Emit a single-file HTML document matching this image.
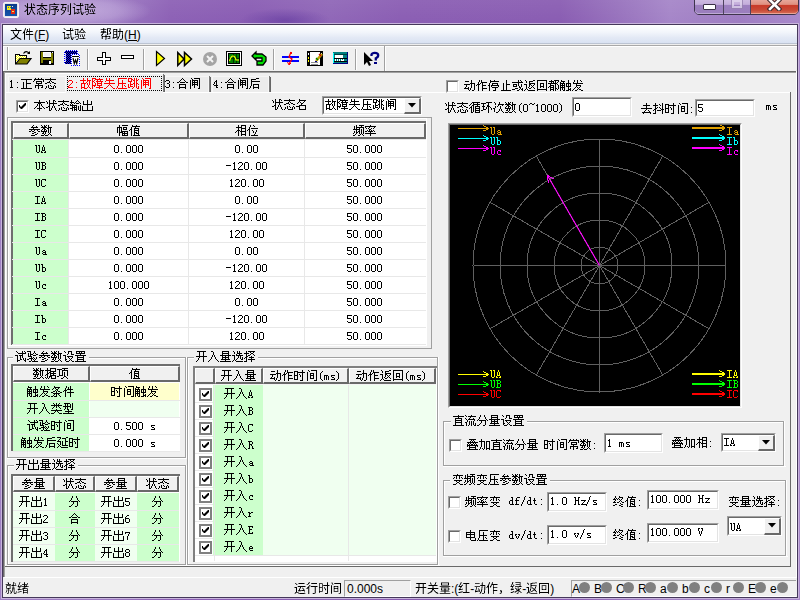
<!DOCTYPE html><html><head><meta charset="utf-8"><style>
html,body{margin:0;padding:0;width:800px;height:600px;overflow:hidden;position:relative}
body{background:#8e64b4;font-family:"Liberation Sans",sans-serif;font-size:12px;color:#000}
div{position:absolute;box-sizing:border-box}
.t{white-space:nowrap;line-height:13px;font-size:12px}
.m{white-space:nowrap;line-height:13px;font-family:"Liberation Mono",monospace;font-size:12px;letter-spacing:-1.2px}
svg{position:absolute}
</style></head><body>

<div style="left:0px;top:0px;width:800px;height:600px;background:linear-gradient(90deg,#a080c4 0px,#9c7ac2 110px,#8c60b5 170px,#895cb3 250px,#8f66b7 330px,#8a5db3 400px,#895cb2 560px,#9670bc 615px,#a585c8 670px,#9e7cc2 740px,#a888cb 800px)"></div>
<div style="left:240px;top:8px;width:90px;height:24px;background:radial-gradient(ellipse at center,rgba(80,40,150,0.45) 0%,rgba(80,40,150,0) 70%)"></div>
<div style="left:0px;top:0px;width:800px;height:24px;background:linear-gradient(180deg,rgba(255,255,255,0.06),rgba(255,255,255,0))"></div>
<div style="left:0px;top:-6px;width:150px;height:34px;background:radial-gradient(ellipse at 45% 50%,rgba(225,210,242,0.55) 0%,rgba(225,210,242,0.3) 45%,rgba(225,210,242,0) 72%)"></div>
<div style="left:3px;top:2px;width:16px;height:16px;background:#e6e2ea;border-radius:3px;box-shadow:inset 0 0 0 1px #f4f2f6"></div>
<div style="left:5px;top:4px;width:12px;height:12px;background:linear-gradient(#0c3c8a,#1556ac)"></div>
<div style="left:7px;top:6px;width:4px;height:4px;background:#f4ec10"></div>
<div style="left:11px;top:9px;width:4px;height:5px;background:#e82810"></div>
<div style="left:8px;top:7px;width:1px;height:1px;background:#2060c0"></div>
<div style="left:10px;top:7px;width:1px;height:1px;background:#2060c0"></div>
<div style="left:12px;top:6px;width:1px;height:1px;background:#e0e8ff"></div>
<div style="left:12px;top:11px;width:2px;height:1px;background:#f0e060"></div>
<div style="left:694px;top:-3px;width:105px;height:18px;border:1px solid #3e344c;border-radius:0 0 5px 5px;overflow:hidden;background:transparent"></div>
<div style="left:695px;top:-2px;width:28px;height:16px;border-radius:0 0 0 4px;background:linear-gradient(180deg,#d2c0e4 0%,#c4aedb 40%,#9d80bf 45%,#9a7dbd 100%);box-shadow:inset 0 -1px 0 rgba(255,255,255,0.35)"></div>
<div style="left:723px;top:0px;width:1px;height:14px;background:#4e425e"></div>
<div style="left:724px;top:-2px;width:26px;height:16px;background:linear-gradient(180deg,#d2c0e4 0%,#c4aedb 40%,#9d80bf 45%,#9a7dbd 100%);box-shadow:inset 0 -1px 0 rgba(255,255,255,0.35)"></div>
<div style="left:750px;top:0px;width:1px;height:14px;background:#4e425e"></div>
<div style="left:751px;top:-2px;width:47px;height:16px;border-radius:0 0 4px 0;background:linear-gradient(180deg,#eab0a4 0%,#e09080 40%,#c83a28 47%,#c84a36 75%,#d8705a 100%);box-shadow:inset 0 -1px 0 rgba(255,220,210,0.5)"></div>
<div style="left:703px;top:4px;width:13px;height:6px;background:#fff;border:1px solid #3a3046;border-radius:1px"></div>
<div style="left:731px;top:-1px;width:12px;height:10px;border:1px solid rgba(150,130,175,0.8);background:transparent"></div>
<div style="left:732px;top:0px;width:10px;height:8px;border:2px solid rgba(225,215,238,0.75);background:transparent"></div>
<svg style="left:767px;top:-2px" width="15" height="13"><path d="M3 2 L12 11 M12 2 L3 11" stroke="#40282e" stroke-width="4.6" stroke-linecap="square"/><path d="M3 2 L12 11 M12 2 L3 11" stroke="#fff" stroke-width="2.6" stroke-linecap="square"/></svg>
<div style="left:1px;top:23px;width:798px;height:576px;border:1px solid #c8b4dc"></div>
<div style="left:2px;top:24px;width:796px;height:574px;border:1px solid #45385a;background:#f0f0f0"></div>
<div style="left:3px;top:25px;width:794px;height:18px;background:linear-gradient(180deg,#ffffff 0%,#f2f5fb 40%,#e3e9f5 70%,#d9e2f2 100%)"></div>
<div style="left:3px;top:43px;width:794px;height:1px;background:#bcc4d2"></div>
<div style="left:3px;top:44px;width:794px;height:1px;background:#eeeeee"></div>
<div style="left:3px;top:45px;width:794px;height:1px;background:#a8a8a8"></div>
<div class="t" style="left:34px;top:29px;color:#000">(F)</div>
<div style="left:38px;top:40px;width:7px;height:1px;background:#000"></div>
<div class="t" style="left:124px;top:29px;color:#000">(H)</div>
<div style="left:128px;top:40px;width:9px;height:1px;background:#000"></div>
<div style="left:3px;top:46px;width:794px;height:1px;background:#ffffff"></div>
<div style="left:3px;top:46px;width:1px;height:25px;background:#ffffff"></div>
<div style="left:3px;top:71px;width:1px;height:506px;background:#6a6a6a"></div>
<div style="left:4px;top:72px;width:1px;height:505px;background:#a0a0a0"></div>
<div style="left:796px;top:71px;width:1px;height:507px;background:#ffffff"></div>
<div style="left:7px;top:47px;width:1px;height:23px;background:#a0a0a0"></div>
<div style="left:8px;top:47px;width:1px;height:23px;background:#fff"></div>
<div style="left:87px;top:49px;width:1px;height:21px;background:#a0a0a0"></div>
<div style="left:88px;top:49px;width:1px;height:21px;background:#fff"></div>
<div style="left:143px;top:49px;width:1px;height:21px;background:#a0a0a0"></div>
<div style="left:144px;top:49px;width:1px;height:21px;background:#fff"></div>
<div style="left:273px;top:49px;width:1px;height:21px;background:#a0a0a0"></div>
<div style="left:274px;top:49px;width:1px;height:21px;background:#fff"></div>
<div style="left:355px;top:49px;width:1px;height:21px;background:#a0a0a0"></div>
<div style="left:356px;top:49px;width:1px;height:21px;background:#fff"></div>
<div style="left:384px;top:46px;width:1px;height:25px;background:#a0a0a0"></div>
<div style="left:385px;top:46px;width:1px;height:25px;background:#fff"></div>
<div style="left:3px;top:71px;width:793px;height:1px;background:#6a6a6a"></div>
<div style="left:4px;top:72px;width:792px;height:1px;background:#a0a0a0"></div>
<svg style="left:0;top:0" width="400" height="72" viewBox="0 0 400 72">
<defs><pattern id="dy" width="2" height="2" patternUnits="userSpaceOnUse"><rect width="2" height="2" fill="#fff"/><rect width="1" height="1" fill="#ff0"/><rect x="1" y="1" width="1" height="1" fill="#ff0"/></pattern>
<pattern id="db" width="2" height="2" patternUnits="userSpaceOnUse"><rect width="2" height="2" fill="#000"/><rect width="1" height="1" fill="#00f"/><rect x="1" y="1" width="1" height="1" fill="#00f"/></pattern>
<pattern id="dl" width="2" height="2" patternUnits="userSpaceOnUse"><rect width="2" height="2" fill="#fff"/><rect width="1" height="1" fill="#00f"/><rect x="1" y="1" width="1" height="1" fill="#00f"/></pattern></defs>
<g shape-rendering="crispEdges">
<!-- open folder -->
<path d="M15 54 H19 L20 55 H26 V59 H19 L16 63 Z" fill="url(#dy)"/>
<path d="M15 54 H19 V55 H26 V58" fill="none" stroke="#000" stroke-width="1" transform="translate(0.5,0.5)"/>
<rect x="15" y="54" width="1" height="10" fill="#000"/>
<path d="M16 64 L20 58 H31 L27 64 Z" fill="#808000"/>
<path d="M15 64 H27 L31 58.5 H20 L16 63.5" fill="none" stroke="#000" stroke-width="1.2" shape-rendering="auto"/>
<path d="M23.5 53.5 Q26 50 29 53" fill="none" stroke="#000" stroke-width="1.2" shape-rendering="auto"/>
<path d="M27 54 H30 V51 Z" fill="#000" shape-rendering="auto"/>
<!-- save -->
<rect x="40" y="51" width="14" height="14" fill="#000"/>
<rect x="41" y="52" width="2" height="11" fill="#808000"/>
<rect x="51" y="53" width="2" height="10" fill="#808000"/>
<rect x="41" y="58" width="12" height="2" fill="#808000"/>
<rect x="43" y="52" width="8" height="5" fill="#fff"/>
<rect x="44" y="53" width="6" height="3" fill="#f0f0f0"/>
<rect x="49" y="61" width="2" height="3" fill="#fff"/>
<rect x="52" y="52" width="1" height="1" fill="#fff"/>
<!-- word -->
<path d="M64 53 L67 50 H78 V55 H71 V64 H64 Z" fill="url(#db)"/>
<path d="M64.5 63.5 V52.5 L66.5 50.5 H77.5 V55" fill="none" stroke="url(#dl)" stroke-width="1"/>
<rect x="65" y="53" width="1" height="9" fill="#c0c0ff"/>
<rect x="71" y="54" width="9" height="12" fill="url(#dl)"/>
<rect x="72" y="55" width="7" height="10" fill="#fff"/>
<rect x="72" y="56" width="7" height="1" fill="#000"/>
<path d="M73 58 L74.3 63.5 L75.5 60 L76.7 63.5 L78 58" fill="none" stroke="#000" stroke-width="1.2" shape-rendering="auto"/>
<!-- plus -->
<path d="M102.5 52.5 H105.5 V57.5 H110.5 V60.5 H105.5 V64.5 H102.5 V60.5 H97.5 V57.5 H102.5 Z" fill="#fff" stroke="#000" stroke-width="1"/>
<!-- minus -->
<rect x="121.5" y="55.5" width="12" height="3" fill="#fff" stroke="#000" stroke-width="1"/>
<!-- play -->
<path d="M156.5 51.5 V65.5 L164.5 58.5 Z" fill="#ff0" stroke="#000" stroke-width="1.2" shape-rendering="auto"/>
<!-- ff -->
<path d="M177.8 52.5 V65.5 L184 59 Z M184.5 52.5 V65.5 L191.5 59 Z" fill="#ff0" stroke="#000" stroke-width="1.5" shape-rendering="auto"/>
<!-- stop -->
<circle cx="210" cy="59" r="7" fill="#a4a4a4" shape-rendering="auto"/>
<path d="M207 56 L213 62 M213 56 L207 62" stroke="#f4f4f4" stroke-width="2" shape-rendering="auto"/>
<!-- scope -->
<rect x="226" y="51" width="16" height="15" fill="#000"/>
<rect x="227.5" y="52.5" width="13" height="12" fill="none" stroke="#fff" stroke-width="1"/>
<rect x="229" y="54" width="10" height="9" fill="#008000"/>
<path d="M229 58 H239 M233 54 V63 M236 54 V63" stroke="#000" stroke-width="1" opacity="0.6"/>
<path d="M229.5 61 Q231 56 233 56 Q235 56 236 60 L239 60" fill="none" stroke="#ff0" stroke-width="1.2" shape-rendering="auto"/>
<!-- undo -->
<path d="M252 56 L256 52 V54 H262 L266 57 V61 L263 65 H257 V61 H262 V58 H256 V60 Z" fill="#00e000" stroke="#000" stroke-width="1.3" shape-rendering="auto"/>
<!-- red/blue -->
<rect x="282" y="56" width="17" height="2" fill="#0000ff"/>
<rect x="282" y="60" width="17" height="2" fill="#0000ff"/>
<path d="M291 52 L289 57 L292 59 L289 64" fill="none" stroke="#ff0000" stroke-width="1.3" shape-rendering="auto"/>
<rect x="290" y="51.5" width="2" height="2" fill="#f00"/>
<path d="M287.5 62 L289 65 L291 63" fill="none" stroke="#f00" stroke-width="1" shape-rendering="auto"/>
<!-- film -->
<rect x="307" y="51" width="16" height="15" fill="#000"/>
<rect x="310" y="52" width="10" height="13" fill="#fff"/>
<rect x="307" y="52" width="3" height="1" fill="#000"/>
<rect x="308" y="53" width="1" height="2" fill="#fff"/>
<rect x="308" y="57" width="1" height="2" fill="#ff0"/>
<rect x="308" y="60" width="1" height="2" fill="#ff0"/>
<rect x="321" y="53" width="1" height="2" fill="#fff"/>
<rect x="323" y="51" width="0" height="15" fill="#000"/>
<path d="M322 54 L316 61" stroke="#c0a000" stroke-width="2.5" shape-rendering="auto"/>
<path d="M319 54 L321 56" stroke="#c00000" stroke-width="1.2" shape-rendering="auto"/>
<path d="M316 58 L318 60" stroke="#008000" stroke-width="1.2" shape-rendering="auto"/>
<rect x="315" y="61" width="2" height="2" fill="#000080"/>
<rect x="311" y="62" width="7" height="1" fill="#909090"/>
<rect x="311" y="64" width="7" height="1" fill="#909090"/>
<!-- calc -->
<rect x="333" y="52" width="15" height="12" fill="#000080"/>
<rect x="333" y="52" width="14" height="11" fill="#008080"/>
<rect x="333" y="53" width="1" height="10" fill="#00ffff"/>
<rect x="335" y="55" width="8" height="3" fill="#fff"/>
<rect x="334" y="54" width="13" height="1" fill="#000" opacity="0.5"/>
<rect x="334" y="58" width="13" height="1" fill="#000"/>
<rect x="334" y="61" width="13" height="1" fill="#000"/>
<rect x="335" y="59" width="1" height="1" fill="#fff"/><rect x="337" y="59" width="1" height="1" fill="#fff"/><rect x="339" y="59" width="1" height="1" fill="#fff"/><rect x="341" y="59" width="1" height="1" fill="#fff"/><rect x="343" y="59" width="1" height="1" fill="#fff"/>
<rect x="335" y="60" width="1" height="1" fill="#fff"/><rect x="337" y="60" width="1" height="1" fill="#fff"/><rect x="339" y="60" width="1" height="1" fill="#fff"/><rect x="341" y="60" width="3" height="1" fill="#fff"/>
<!-- help -->
<path d="M364 52 V65 L367 62 L369 66 L371 65 L369 61 H373 Z" fill="#000" shape-rendering="auto"/>
</g>
<path d="M371.5 56 V54.5 Q372 52.8 374.8 52.8 Q378.2 52.8 378.2 55.2 Q378.2 57.2 375.8 58.2 V60.5" fill="none" stroke="#000080" stroke-width="2.3"/>
<rect x="374" y="62" width="3" height="2" fill="#000080"/>
</svg>
<div style="left:8px;top:76px;width:58px;height:17px;background:#ececec;border:1px solid #f6f6f6"></div>
<div style="left:67px;top:76px;width:95px;height:15px;border:1px dotted #000"></div>
<div style="left:163px;top:74px;width:1px;height:19px;background:#7c7c7c"></div>
<div style="left:164px;top:75px;width:1px;height:18px;background:#666"></div>
<div style="left:165px;top:76px;width:44px;height:17px;background:#ececec;border:1px solid #f6f6f6"></div>
<div style="left:209px;top:76px;width:1px;height:17px;background:#7c7c7c"></div>
<div style="left:210px;top:77px;width:1px;height:16px;background:#666"></div>
<div style="left:212px;top:76px;width:57px;height:17px;background:#ececec;border:1px solid #f6f6f6"></div>
<div style="left:269px;top:76px;width:1px;height:17px;background:#7c7c7c"></div>
<div style="left:270px;top:77px;width:1px;height:16px;background:#666"></div>
<div style="left:5px;top:73px;width:158px;height:1px;background:#ffffff"></div>
<div style="left:5px;top:73px;width:1px;height:493px;background:#ffffff"></div>
<div style="left:5px;top:92px;width:61px;height:1px;background:#ffffff"></div>
<div style="left:163px;top:92px;width:627px;height:1px;background:#ffffff"></div>
<div style="left:790px;top:92px;width:1px;height:475px;background:#696969"></div>
<div style="left:5px;top:566px;width:786px;height:1px;background:#696969"></div>
<div style="left:16px;top:100px;width:13px;height:13px;background:#fff;border-top:1px solid #a0a0a0;border-left:1px solid #a0a0a0;border-right:1px solid #fff;border-bottom:1px solid #fff;box-sizing:border-box"></div>
<div style="left:17px;top:101px;width:11px;height:11px;border-top:1px solid #696969;border-left:1px solid #696969;border-right:1px solid #e3e3e3;border-bottom:1px solid #e3e3e3;box-sizing:border-box"></div>
<svg style="position:absolute;left:19px;top:103px" width="7" height="7"><path d="M0 2 L0 4 L2 6 L3 6 L7 2 L7 0 L6 0 L2 4 L1 3 L1 2 Z" fill="#000"/></svg>
<div style="left:322px;top:96px;width:100px;height:19px;background:#fff;border-top:1px solid #a0a0a0;border-left:1px solid #a0a0a0;border-right:1px solid #fff;border-bottom:1px solid #fff;box-sizing:border-box"></div>
<div style="left:323px;top:97px;width:98px;height:17px;border-top:1px solid #696969;border-left:1px solid #696969;border-right:1px solid #e3e3e3;border-bottom:1px solid #e3e3e3;box-sizing:border-box"></div>
<div style="left:404px;top:98px;width:17px;height:16px;background:#f0f0f0;border-top:1px solid #fff;border-left:1px solid #fff;border-right:2px solid #696969;border-bottom:2px solid #696969;box-sizing:border-box"></div>
<svg style="position:absolute;left:408px;top:103px" width="8" height="5"><path d="M0 0 H8 L4 4.5 Z" fill="#000"/></svg>
<div style="left:7px;top:117px;width:425px;height:232px;border:1px solid #a0a0a0"></div>
<div style="left:8px;top:118px;width:419px;height:228px;border:1px solid #fff"></div>
<div style="left:11px;top:121px;width:415px;height:224px;background:#fff;border-left:2px solid #6e6e6e;border-top:2px solid #6e6e6e"></div>
<div style="left:13px;top:123px;width:56px;height:16px;background:#f0f0f0;border-top:1px solid #fff;border-left:1px solid #fff;border-right:2px solid #696969;border-bottom:2px solid #696969;box-sizing:border-box"></div>
<div style="left:69px;top:123px;width:120px;height:16px;background:#f0f0f0;border-top:1px solid #fff;border-left:1px solid #fff;border-right:2px solid #696969;border-bottom:2px solid #696969;box-sizing:border-box"></div>
<div style="left:189px;top:123px;width:116px;height:16px;background:#f0f0f0;border-top:1px solid #fff;border-left:1px solid #fff;border-right:2px solid #696969;border-bottom:2px solid #696969;box-sizing:border-box"></div>
<div style="left:305px;top:123px;width:121px;height:16px;background:#f0f0f0;border-top:1px solid #fff;border-left:1px solid #fff;border-right:2px solid #696969;border-bottom:2px solid #696969;box-sizing:border-box"></div>
<div style="left:13px;top:140px;width:56px;height:1px;background:#ccffcc"></div>
<div style="left:13px;top:141px;width:56px;height:16px;background:#ccffcc"></div>
<div style="left:12px;top:157px;width:414px;height:1px;background:#e8e8e8"></div>
<div style="left:13px;top:158px;width:56px;height:16px;background:#ccffcc"></div>
<div style="left:12px;top:174px;width:414px;height:1px;background:#e8e8e8"></div>
<div style="left:13px;top:175px;width:56px;height:16px;background:#ccffcc"></div>
<div style="left:12px;top:191px;width:414px;height:1px;background:#e8e8e8"></div>
<div style="left:13px;top:192px;width:56px;height:16px;background:#ccffcc"></div>
<div style="left:12px;top:208px;width:414px;height:1px;background:#e8e8e8"></div>
<div style="left:13px;top:209px;width:56px;height:16px;background:#ccffcc"></div>
<div style="left:12px;top:225px;width:414px;height:1px;background:#e8e8e8"></div>
<div style="left:13px;top:226px;width:56px;height:16px;background:#ccffcc"></div>
<div style="left:12px;top:242px;width:414px;height:1px;background:#e8e8e8"></div>
<div style="left:13px;top:243px;width:56px;height:16px;background:#ccffcc"></div>
<div style="left:12px;top:259px;width:414px;height:1px;background:#e8e8e8"></div>
<div style="left:13px;top:260px;width:56px;height:16px;background:#ccffcc"></div>
<div style="left:12px;top:276px;width:414px;height:1px;background:#e8e8e8"></div>
<div style="left:13px;top:277px;width:56px;height:16px;background:#ccffcc"></div>
<div style="left:12px;top:293px;width:414px;height:1px;background:#e8e8e8"></div>
<div style="left:13px;top:294px;width:56px;height:16px;background:#ccffcc"></div>
<div style="left:12px;top:310px;width:414px;height:1px;background:#e8e8e8"></div>
<div style="left:13px;top:311px;width:56px;height:16px;background:#ccffcc"></div>
<div style="left:12px;top:327px;width:414px;height:1px;background:#e8e8e8"></div>
<div style="left:13px;top:328px;width:56px;height:16px;background:#ccffcc"></div>
<div style="left:12px;top:344px;width:414px;height:1px;background:#e8e8e8"></div>
<div style="left:68px;top:139px;width:1px;height:205px;background:#e8e8e8"></div>
<div style="left:188px;top:139px;width:1px;height:205px;background:#e8e8e8"></div>
<div style="left:304px;top:139px;width:1px;height:205px;background:#e8e8e8"></div>
<div style="left:12px;top:139px;width:414px;height:1px;background:#e8e8e8"></div>
<div style="left:7px;top:357px;width:180px;height:1px;background:#a0a0a0"></div>
<div style="left:8px;top:358px;width:179px;height:1px;background:#fff"></div>
<div style="left:7px;top:357px;width:1px;height:102px;background:#a0a0a0"></div>
<div style="left:8px;top:358px;width:1px;height:100px;background:#fff"></div>
<div style="left:7px;top:457px;width:180px;height:1px;background:#a0a0a0"></div>
<div style="left:7px;top:458px;width:181px;height:1px;background:#fff"></div>
<div style="left:185px;top:357px;width:1px;height:101px;background:#a0a0a0"></div>
<div style="left:186px;top:357px;width:1px;height:102px;background:#fff"></div>
<div style="left:13px;top:351px;width:76px;height:13px;background:#f0f0f0"></div>
<div style="left:11px;top:364px;width:169px;height:87px;background:#fff;border-left:2px solid #6e6e6e;border-top:2px solid #6e6e6e"></div>
<div style="left:13px;top:366px;width:77px;height:16px;background:#f0f0f0;border-top:1px solid #fff;border-left:1px solid #fff;border-right:2px solid #696969;border-bottom:2px solid #696969;box-sizing:border-box"></div>
<div style="left:90px;top:366px;width:90px;height:16px;background:#f0f0f0;border-top:1px solid #fff;border-left:1px solid #fff;border-right:2px solid #696969;border-bottom:2px solid #696969;box-sizing:border-box"></div>
<div style="left:13px;top:383px;width:76px;height:1px;background:#ccffcc"></div>
<div style="left:90px;top:383px;width:89px;height:1px;background:#ffffcc"></div>
<div style="left:13px;top:384px;width:76px;height:16px;background:#ccffcc"></div>
<div style="left:90px;top:384px;width:89px;height:16px;background:#ffffcc"></div>
<div style="left:13px;top:400px;width:167px;height:1px;background:#e8e8e8"></div>
<div style="left:13px;top:401px;width:76px;height:16px;background:#ccffcc"></div>
<div style="left:90px;top:401px;width:89px;height:16px;background:#f0fff0"></div>
<div style="left:13px;top:417px;width:167px;height:1px;background:#e8e8e8"></div>
<div class="t" style="left:90px;top:403px;width:90px;text-align:center;"></div>
<div style="left:13px;top:418px;width:76px;height:16px;background:#ccffcc"></div>
<div style="left:90px;top:418px;width:89px;height:16px;background:#fff"></div>
<div style="left:13px;top:434px;width:167px;height:1px;background:#e8e8e8"></div>
<div style="left:13px;top:435px;width:76px;height:16px;background:#ccffcc"></div>
<div style="left:90px;top:435px;width:89px;height:16px;background:#fff"></div>
<div style="left:13px;top:451px;width:167px;height:1px;background:#e8e8e8"></div>
<div style="left:7px;top:465px;width:180px;height:1px;background:#a0a0a0"></div>
<div style="left:8px;top:466px;width:179px;height:1px;background:#fff"></div>
<div style="left:7px;top:465px;width:1px;height:101px;background:#a0a0a0"></div>
<div style="left:8px;top:466px;width:1px;height:99px;background:#fff"></div>
<div style="left:7px;top:564px;width:180px;height:1px;background:#a0a0a0"></div>
<div style="left:7px;top:565px;width:181px;height:1px;background:#fff"></div>
<div style="left:185px;top:465px;width:1px;height:100px;background:#a0a0a0"></div>
<div style="left:186px;top:465px;width:1px;height:101px;background:#fff"></div>
<div style="left:14px;top:459px;width:64px;height:13px;background:#f0f0f0"></div>
<div style="left:11px;top:474px;width:169px;height:88px;background:#fff;border-left:2px solid #6e6e6e;border-top:2px solid #6e6e6e"></div>
<div style="left:13px;top:476px;width:42px;height:16px;background:#f0f0f0;border-top:1px solid #fff;border-left:1px solid #fff;border-right:2px solid #696969;border-bottom:2px solid #696969;box-sizing:border-box"></div>
<div style="left:55px;top:476px;width:40px;height:16px;background:#f0f0f0;border-top:1px solid #fff;border-left:1px solid #fff;border-right:2px solid #696969;border-bottom:2px solid #696969;box-sizing:border-box"></div>
<div style="left:95px;top:476px;width:42px;height:16px;background:#f0f0f0;border-top:1px solid #fff;border-left:1px solid #fff;border-right:2px solid #696969;border-bottom:2px solid #696969;box-sizing:border-box"></div>
<div style="left:137px;top:476px;width:42px;height:16px;background:#f0f0f0;border-top:1px solid #fff;border-left:1px solid #fff;border-right:2px solid #696969;border-bottom:2px solid #696969;box-sizing:border-box"></div>
<div style="left:13px;top:493px;width:42px;height:1px;background:#f0fff0"></div>
<div style="left:13px;top:494px;width:42px;height:16px;background:#f0fff0"></div>
<div style="left:55px;top:493px;width:40px;height:1px;background:#ccffcc"></div>
<div style="left:55px;top:494px;width:40px;height:16px;background:#ccffcc"></div>
<div style="left:95px;top:493px;width:42px;height:1px;background:#f0fff0"></div>
<div style="left:95px;top:494px;width:42px;height:16px;background:#f0fff0"></div>
<div style="left:137px;top:493px;width:42px;height:1px;background:#ccffcc"></div>
<div style="left:137px;top:494px;width:42px;height:16px;background:#ccffcc"></div>
<div style="left:13px;top:510px;width:166px;height:1px;background:#e8e8e8"></div>
<div style="left:13px;top:511px;width:42px;height:16px;background:#f0fff0"></div>
<div style="left:55px;top:511px;width:40px;height:16px;background:#ccffcc"></div>
<div style="left:95px;top:511px;width:42px;height:16px;background:#f0fff0"></div>
<div style="left:137px;top:511px;width:42px;height:16px;background:#ccffcc"></div>
<div style="left:13px;top:527px;width:166px;height:1px;background:#e8e8e8"></div>
<div style="left:13px;top:528px;width:42px;height:16px;background:#f0fff0"></div>
<div style="left:55px;top:528px;width:40px;height:16px;background:#ccffcc"></div>
<div style="left:95px;top:528px;width:42px;height:16px;background:#f0fff0"></div>
<div style="left:137px;top:528px;width:42px;height:16px;background:#ccffcc"></div>
<div style="left:13px;top:544px;width:166px;height:1px;background:#e8e8e8"></div>
<div style="left:13px;top:545px;width:42px;height:16px;background:#f0fff0"></div>
<div style="left:55px;top:545px;width:40px;height:16px;background:#ccffcc"></div>
<div style="left:95px;top:545px;width:42px;height:16px;background:#f0fff0"></div>
<div style="left:137px;top:545px;width:42px;height:16px;background:#ccffcc"></div>
<div style="left:13px;top:561px;width:166px;height:1px;background:#e8e8e8"></div>
<div style="left:187px;top:357px;width:252px;height:1px;background:#a0a0a0"></div>
<div style="left:188px;top:358px;width:251px;height:1px;background:#fff"></div>
<div style="left:187px;top:357px;width:1px;height:209px;background:#a0a0a0"></div>
<div style="left:188px;top:358px;width:1px;height:207px;background:#fff"></div>
<div style="left:187px;top:564px;width:252px;height:1px;background:#a0a0a0"></div>
<div style="left:187px;top:565px;width:253px;height:1px;background:#fff"></div>
<div style="left:437px;top:357px;width:1px;height:208px;background:#a0a0a0"></div>
<div style="left:438px;top:357px;width:1px;height:209px;background:#fff"></div>
<div style="left:194px;top:351px;width:64px;height:13px;background:#f0f0f0"></div>
<div style="left:193px;top:366px;width:244px;height:196px;background:#fff;border-left:2px solid #808080;border-top:2px solid #808080"></div>
<div style="left:195px;top:368px;width:20px;height:16px;background:#f0f0f0;border-top:1px solid #fff;border-left:1px solid #fff;border-right:2px solid #696969;border-bottom:2px solid #696969;box-sizing:border-box"></div>
<div class="t" style="left:195px;top:370px;width:20px;text-align:center;font-size:12px;"></div>
<div style="left:215px;top:368px;width:48px;height:16px;background:#f0f0f0;border-top:1px solid #fff;border-left:1px solid #fff;border-right:2px solid #696969;border-bottom:2px solid #696969;box-sizing:border-box"></div>
<div style="left:263px;top:368px;width:86px;height:16px;background:#f0f0f0;border-top:1px solid #fff;border-left:1px solid #fff;border-right:2px solid #696969;border-bottom:2px solid #696969;box-sizing:border-box"></div>
<div style="left:349px;top:368px;width:87px;height:16px;background:#f0f0f0;border-top:1px solid #fff;border-left:1px solid #fff;border-right:2px solid #696969;border-bottom:2px solid #696969;box-sizing:border-box"></div>
<div style="left:195px;top:384px;width:241px;height:1px;background:#f4f4f4"></div>
<div style="left:213px;top:385px;width:50px;height:17px;background:#ccffcc"></div>
<div style="left:263px;top:385px;width:173px;height:17px;background:#f0fff0"></div>
<div style="left:195px;top:402px;width:241px;height:1px;background:#e8e8e8"></div>
<div style="left:199px;top:388px;width:13px;height:13px;background:#fff;border:2px solid #808080"></div>
<svg style="left:202px;top:391px" width="7" height="7"><path d="M0 2 L0 4 L2 6 L3 6 L7 2 L7 0 L6 0 L2 4 L1 3 L1 2 Z" fill="#000"/></svg>
<div style="left:213px;top:402px;width:50px;height:17px;background:#ccffcc"></div>
<div style="left:263px;top:402px;width:173px;height:17px;background:#f0fff0"></div>
<div style="left:195px;top:419px;width:241px;height:1px;background:#e8e8e8"></div>
<div style="left:199px;top:405px;width:13px;height:13px;background:#fff;border:2px solid #808080"></div>
<svg style="left:202px;top:408px" width="7" height="7"><path d="M0 2 L0 4 L2 6 L3 6 L7 2 L7 0 L6 0 L2 4 L1 3 L1 2 Z" fill="#000"/></svg>
<div style="left:213px;top:419px;width:50px;height:17px;background:#ccffcc"></div>
<div style="left:263px;top:419px;width:173px;height:17px;background:#f0fff0"></div>
<div style="left:195px;top:436px;width:241px;height:1px;background:#e8e8e8"></div>
<div style="left:199px;top:422px;width:13px;height:13px;background:#fff;border:2px solid #808080"></div>
<svg style="left:202px;top:425px" width="7" height="7"><path d="M0 2 L0 4 L2 6 L3 6 L7 2 L7 0 L6 0 L2 4 L1 3 L1 2 Z" fill="#000"/></svg>
<div style="left:213px;top:436px;width:50px;height:17px;background:#ccffcc"></div>
<div style="left:263px;top:436px;width:173px;height:17px;background:#f0fff0"></div>
<div style="left:195px;top:453px;width:241px;height:1px;background:#e8e8e8"></div>
<div style="left:199px;top:439px;width:13px;height:13px;background:#fff;border:2px solid #808080"></div>
<svg style="left:202px;top:442px" width="7" height="7"><path d="M0 2 L0 4 L2 6 L3 6 L7 2 L7 0 L6 0 L2 4 L1 3 L1 2 Z" fill="#000"/></svg>
<div style="left:213px;top:453px;width:50px;height:17px;background:#ccffcc"></div>
<div style="left:263px;top:453px;width:173px;height:17px;background:#f0fff0"></div>
<div style="left:195px;top:470px;width:241px;height:1px;background:#e8e8e8"></div>
<div style="left:199px;top:456px;width:13px;height:13px;background:#fff;border:2px solid #808080"></div>
<svg style="left:202px;top:459px" width="7" height="7"><path d="M0 2 L0 4 L2 6 L3 6 L7 2 L7 0 L6 0 L2 4 L1 3 L1 2 Z" fill="#000"/></svg>
<div style="left:213px;top:470px;width:50px;height:17px;background:#ccffcc"></div>
<div style="left:263px;top:470px;width:173px;height:17px;background:#f0fff0"></div>
<div style="left:195px;top:487px;width:241px;height:1px;background:#e8e8e8"></div>
<div style="left:199px;top:473px;width:13px;height:13px;background:#fff;border:2px solid #808080"></div>
<svg style="left:202px;top:476px" width="7" height="7"><path d="M0 2 L0 4 L2 6 L3 6 L7 2 L7 0 L6 0 L2 4 L1 3 L1 2 Z" fill="#000"/></svg>
<div style="left:213px;top:487px;width:50px;height:17px;background:#ccffcc"></div>
<div style="left:263px;top:487px;width:173px;height:17px;background:#f0fff0"></div>
<div style="left:195px;top:504px;width:241px;height:1px;background:#e8e8e8"></div>
<div style="left:199px;top:490px;width:13px;height:13px;background:#fff;border:2px solid #808080"></div>
<svg style="left:202px;top:493px" width="7" height="7"><path d="M0 2 L0 4 L2 6 L3 6 L7 2 L7 0 L6 0 L2 4 L1 3 L1 2 Z" fill="#000"/></svg>
<div style="left:213px;top:504px;width:50px;height:17px;background:#ccffcc"></div>
<div style="left:263px;top:504px;width:173px;height:17px;background:#f0fff0"></div>
<div style="left:195px;top:521px;width:241px;height:1px;background:#e8e8e8"></div>
<div style="left:199px;top:507px;width:13px;height:13px;background:#fff;border:2px solid #808080"></div>
<svg style="left:202px;top:510px" width="7" height="7"><path d="M0 2 L0 4 L2 6 L3 6 L7 2 L7 0 L6 0 L2 4 L1 3 L1 2 Z" fill="#000"/></svg>
<div style="left:213px;top:521px;width:50px;height:17px;background:#ccffcc"></div>
<div style="left:263px;top:521px;width:173px;height:17px;background:#f0fff0"></div>
<div style="left:195px;top:538px;width:241px;height:1px;background:#e8e8e8"></div>
<div style="left:199px;top:524px;width:13px;height:13px;background:#fff;border:2px solid #808080"></div>
<svg style="left:202px;top:527px" width="7" height="7"><path d="M0 2 L0 4 L2 6 L3 6 L7 2 L7 0 L6 0 L2 4 L1 3 L1 2 Z" fill="#000"/></svg>
<div style="left:213px;top:538px;width:50px;height:17px;background:#ccffcc"></div>
<div style="left:263px;top:538px;width:173px;height:17px;background:#f0fff0"></div>
<div style="left:195px;top:555px;width:241px;height:1px;background:#e8e8e8"></div>
<div style="left:199px;top:541px;width:13px;height:13px;background:#fff;border:2px solid #808080"></div>
<svg style="left:202px;top:544px" width="7" height="7"><path d="M0 2 L0 4 L2 6 L3 6 L7 2 L7 0 L6 0 L2 4 L1 3 L1 2 Z" fill="#000"/></svg>
<div style="left:214px;top:385px;width:1px;height:176px;background:#e8e8e8"></div>
<div style="left:348px;top:385px;width:1px;height:176px;background:#e8e8e8"></div>
<div style="left:446px;top:80px;width:13px;height:13px;background:#fff;border-top:1px solid #a0a0a0;border-left:1px solid #a0a0a0;border-right:1px solid #fff;border-bottom:1px solid #fff;box-sizing:border-box"></div>
<div style="left:447px;top:81px;width:11px;height:11px;border-top:1px solid #696969;border-left:1px solid #696969;border-right:1px solid #e3e3e3;border-bottom:1px solid #e3e3e3;box-sizing:border-box"></div>
<div style="left:572px;top:97px;width:60px;height:20px;background:#fff;border-top:1px solid #a0a0a0;border-left:1px solid #a0a0a0;border-right:1px solid #fff;border-bottom:1px solid #fff;box-sizing:border-box"></div>
<div style="left:573px;top:98px;width:58px;height:18px;border-top:1px solid #696969;border-left:1px solid #696969;border-right:1px solid #e3e3e3;border-bottom:1px solid #e3e3e3;box-sizing:border-box"></div>
<div style="left:695px;top:99px;width:60px;height:18px;background:#fff;border-top:1px solid #a0a0a0;border-left:1px solid #a0a0a0;border-right:1px solid #fff;border-bottom:1px solid #fff;box-sizing:border-box"></div>
<div style="left:696px;top:100px;width:58px;height:16px;border-top:1px solid #696969;border-left:1px solid #696969;border-right:1px solid #e3e3e3;border-bottom:1px solid #e3e3e3;box-sizing:border-box"></div>
<div style="left:448px;top:123px;width:294px;height:285px;background:#000;border-top:1px solid #a0a0a0;border-left:1px solid #a0a0a0;border-right:1px solid #fff;border-bottom:1px solid #fff"></div>
<div style="left:449px;top:124px;width:292px;height:283px;border-top:1px solid #696969;border-left:1px solid #696969;border-right:1px solid #e3e3e3;border-bottom:1px solid #e3e3e3"></div>
<svg style="left:450px;top:125px" width="290" height="281" viewBox="450 125 290 281"><circle cx="599.5" cy="265.5" r="18.5" fill="none" stroke="#606060" stroke-width="1" shape-rendering="crispEdges"/><circle cx="599.5" cy="265.5" r="45.5" fill="none" stroke="#606060" stroke-width="1" shape-rendering="crispEdges"/><circle cx="599.5" cy="265.5" r="72.5" fill="none" stroke="#606060" stroke-width="1" shape-rendering="crispEdges"/><circle cx="599.5" cy="265.5" r="99.5" fill="none" stroke="#606060" stroke-width="1" shape-rendering="crispEdges"/><circle cx="599.5" cy="265.5" r="126.5" fill="none" stroke="#606060" stroke-width="1" shape-rendering="crispEdges"/><line x1="599.5" y1="265.5" x2="725.5" y2="265.5" stroke="#606060" stroke-width="1" shape-rendering="crispEdges"/><line x1="599.5" y1="265.5" x2="708.6" y2="202.5" stroke="#606060" stroke-width="1" shape-rendering="crispEdges"/><line x1="599.5" y1="265.5" x2="662.5" y2="156.4" stroke="#606060" stroke-width="1" shape-rendering="crispEdges"/><line x1="599.5" y1="265.5" x2="599.5" y2="139.5" stroke="#606060" stroke-width="1" shape-rendering="crispEdges"/><line x1="599.5" y1="265.5" x2="536.5" y2="156.4" stroke="#606060" stroke-width="1" shape-rendering="crispEdges"/><line x1="599.5" y1="265.5" x2="490.4" y2="202.5" stroke="#606060" stroke-width="1" shape-rendering="crispEdges"/><line x1="599.5" y1="265.5" x2="473.5" y2="265.5" stroke="#606060" stroke-width="1" shape-rendering="crispEdges"/><line x1="599.5" y1="265.5" x2="490.4" y2="328.5" stroke="#606060" stroke-width="1" shape-rendering="crispEdges"/><line x1="599.5" y1="265.5" x2="536.5" y2="374.6" stroke="#606060" stroke-width="1" shape-rendering="crispEdges"/><line x1="599.5" y1="265.5" x2="599.5" y2="391.5" stroke="#606060" stroke-width="1" shape-rendering="crispEdges"/><line x1="599.5" y1="265.5" x2="662.5" y2="374.6" stroke="#606060" stroke-width="1" shape-rendering="crispEdges"/><line x1="599.5" y1="265.5" x2="708.6" y2="328.5" stroke="#606060" stroke-width="1" shape-rendering="crispEdges"/><line x1="599.5" y1="265.5" x2="547.5" y2="175.5" stroke="#ff00ff" stroke-width="1.1"/><path d="M547.5 175.5 L548.5 183.5 M547.5 175.5 L554.5 179.5" stroke="#ff00ff" stroke-width="1" fill="none" shape-rendering="crispEdges"/><rect x="458" y="128" width="31" height="1" fill="#e0a000" shape-rendering="crispEdges"/><rect x="483" y="125" width="1" height="1" fill="#e0a000" shape-rendering="crispEdges"/><rect x="484" y="126" width="2" height="1" fill="#e0a000" shape-rendering="crispEdges"/><rect x="486" y="127" width="2" height="1" fill="#e0a000" shape-rendering="crispEdges"/><rect x="486" y="129" width="2" height="1" fill="#e0a000" shape-rendering="crispEdges"/><rect x="483" y="130" width="3" height="1" fill="#e0a000" shape-rendering="crispEdges"/><rect x="458" y="138" width="31" height="1" fill="#00ffff" shape-rendering="crispEdges"/><rect x="483" y="135" width="1" height="1" fill="#00ffff" shape-rendering="crispEdges"/><rect x="484" y="136" width="2" height="1" fill="#00ffff" shape-rendering="crispEdges"/><rect x="486" y="137" width="2" height="1" fill="#00ffff" shape-rendering="crispEdges"/><rect x="486" y="139" width="2" height="1" fill="#00ffff" shape-rendering="crispEdges"/><rect x="483" y="140" width="3" height="1" fill="#00ffff" shape-rendering="crispEdges"/><rect x="458" y="148" width="31" height="1" fill="#ff00ff" shape-rendering="crispEdges"/><rect x="483" y="145" width="1" height="1" fill="#ff00ff" shape-rendering="crispEdges"/><rect x="484" y="146" width="2" height="1" fill="#ff00ff" shape-rendering="crispEdges"/><rect x="486" y="147" width="2" height="1" fill="#ff00ff" shape-rendering="crispEdges"/><rect x="486" y="149" width="2" height="1" fill="#ff00ff" shape-rendering="crispEdges"/><rect x="483" y="150" width="3" height="1" fill="#ff00ff" shape-rendering="crispEdges"/><rect x="692" y="127" width="33" height="2" fill="#e0a000" shape-rendering="crispEdges"/><rect x="719" y="124" width="1" height="1" fill="#e0a000" shape-rendering="crispEdges"/><rect x="720" y="125" width="2" height="1" fill="#e0a000" shape-rendering="crispEdges"/><rect x="722" y="126" width="2" height="1" fill="#e0a000" shape-rendering="crispEdges"/><rect x="723" y="127" width="2" height="1" fill="#e0a000" shape-rendering="crispEdges"/><rect x="722" y="129" width="2" height="1" fill="#e0a000" shape-rendering="crispEdges"/><rect x="719" y="130" width="3" height="1" fill="#e0a000" shape-rendering="crispEdges"/><rect x="692" y="137" width="33" height="2" fill="#00ffff" shape-rendering="crispEdges"/><rect x="719" y="134" width="1" height="1" fill="#00ffff" shape-rendering="crispEdges"/><rect x="720" y="135" width="2" height="1" fill="#00ffff" shape-rendering="crispEdges"/><rect x="722" y="136" width="2" height="1" fill="#00ffff" shape-rendering="crispEdges"/><rect x="723" y="137" width="2" height="1" fill="#00ffff" shape-rendering="crispEdges"/><rect x="722" y="139" width="2" height="1" fill="#00ffff" shape-rendering="crispEdges"/><rect x="719" y="140" width="3" height="1" fill="#00ffff" shape-rendering="crispEdges"/><rect x="692" y="147" width="33" height="2" fill="#ff00ff" shape-rendering="crispEdges"/><rect x="719" y="144" width="1" height="1" fill="#ff00ff" shape-rendering="crispEdges"/><rect x="720" y="145" width="2" height="1" fill="#ff00ff" shape-rendering="crispEdges"/><rect x="722" y="146" width="2" height="1" fill="#ff00ff" shape-rendering="crispEdges"/><rect x="723" y="147" width="2" height="1" fill="#ff00ff" shape-rendering="crispEdges"/><rect x="722" y="149" width="2" height="1" fill="#ff00ff" shape-rendering="crispEdges"/><rect x="719" y="150" width="3" height="1" fill="#ff00ff" shape-rendering="crispEdges"/><rect x="458" y="374" width="31" height="1" fill="#ffff00" shape-rendering="crispEdges"/><rect x="483" y="371" width="1" height="1" fill="#ffff00" shape-rendering="crispEdges"/><rect x="484" y="372" width="2" height="1" fill="#ffff00" shape-rendering="crispEdges"/><rect x="486" y="373" width="2" height="1" fill="#ffff00" shape-rendering="crispEdges"/><rect x="486" y="375" width="2" height="1" fill="#ffff00" shape-rendering="crispEdges"/><rect x="483" y="376" width="3" height="1" fill="#ffff00" shape-rendering="crispEdges"/><rect x="458" y="384" width="31" height="1" fill="#00ff00" shape-rendering="crispEdges"/><rect x="483" y="381" width="1" height="1" fill="#00ff00" shape-rendering="crispEdges"/><rect x="484" y="382" width="2" height="1" fill="#00ff00" shape-rendering="crispEdges"/><rect x="486" y="383" width="2" height="1" fill="#00ff00" shape-rendering="crispEdges"/><rect x="486" y="385" width="2" height="1" fill="#00ff00" shape-rendering="crispEdges"/><rect x="483" y="386" width="3" height="1" fill="#00ff00" shape-rendering="crispEdges"/><rect x="458" y="394" width="31" height="1" fill="#ff0000" shape-rendering="crispEdges"/><rect x="483" y="391" width="1" height="1" fill="#ff0000" shape-rendering="crispEdges"/><rect x="484" y="392" width="2" height="1" fill="#ff0000" shape-rendering="crispEdges"/><rect x="486" y="393" width="2" height="1" fill="#ff0000" shape-rendering="crispEdges"/><rect x="486" y="395" width="2" height="1" fill="#ff0000" shape-rendering="crispEdges"/><rect x="483" y="396" width="3" height="1" fill="#ff0000" shape-rendering="crispEdges"/><rect x="692" y="373" width="33" height="2" fill="#ffff00" shape-rendering="crispEdges"/><rect x="719" y="370" width="1" height="1" fill="#ffff00" shape-rendering="crispEdges"/><rect x="720" y="371" width="2" height="1" fill="#ffff00" shape-rendering="crispEdges"/><rect x="722" y="372" width="2" height="1" fill="#ffff00" shape-rendering="crispEdges"/><rect x="723" y="373" width="2" height="1" fill="#ffff00" shape-rendering="crispEdges"/><rect x="722" y="375" width="2" height="1" fill="#ffff00" shape-rendering="crispEdges"/><rect x="719" y="376" width="3" height="1" fill="#ffff00" shape-rendering="crispEdges"/><rect x="692" y="383" width="33" height="2" fill="#00ff00" shape-rendering="crispEdges"/><rect x="719" y="380" width="1" height="1" fill="#00ff00" shape-rendering="crispEdges"/><rect x="720" y="381" width="2" height="1" fill="#00ff00" shape-rendering="crispEdges"/><rect x="722" y="382" width="2" height="1" fill="#00ff00" shape-rendering="crispEdges"/><rect x="723" y="383" width="2" height="1" fill="#00ff00" shape-rendering="crispEdges"/><rect x="722" y="385" width="2" height="1" fill="#00ff00" shape-rendering="crispEdges"/><rect x="719" y="386" width="3" height="1" fill="#00ff00" shape-rendering="crispEdges"/><rect x="692" y="393" width="33" height="2" fill="#ff0000" shape-rendering="crispEdges"/><rect x="719" y="390" width="1" height="1" fill="#ff0000" shape-rendering="crispEdges"/><rect x="720" y="391" width="2" height="1" fill="#ff0000" shape-rendering="crispEdges"/><rect x="722" y="392" width="2" height="1" fill="#ff0000" shape-rendering="crispEdges"/><rect x="723" y="393" width="2" height="1" fill="#ff0000" shape-rendering="crispEdges"/><rect x="722" y="395" width="2" height="1" fill="#ff0000" shape-rendering="crispEdges"/><rect x="719" y="396" width="3" height="1" fill="#ff0000" shape-rendering="crispEdges"/></svg>
<div style="left:443px;top:421px;width:342px;height:1px;background:#a0a0a0"></div>
<div style="left:444px;top:422px;width:341px;height:1px;background:#fff"></div>
<div style="left:443px;top:421px;width:1px;height:46px;background:#a0a0a0"></div>
<div style="left:444px;top:422px;width:1px;height:44px;background:#fff"></div>
<div style="left:443px;top:465px;width:342px;height:1px;background:#a0a0a0"></div>
<div style="left:443px;top:466px;width:343px;height:1px;background:#fff"></div>
<div style="left:783px;top:421px;width:1px;height:45px;background:#a0a0a0"></div>
<div style="left:784px;top:421px;width:1px;height:46px;background:#fff"></div>
<div style="left:451px;top:415px;width:76px;height:13px;background:#f0f0f0"></div>
<div style="left:449px;top:439px;width:13px;height:13px;background:#fff;border-top:1px solid #a0a0a0;border-left:1px solid #a0a0a0;border-right:1px solid #fff;border-bottom:1px solid #fff;box-sizing:border-box"></div>
<div style="left:450px;top:440px;width:11px;height:11px;border-top:1px solid #696969;border-left:1px solid #696969;border-right:1px solid #e3e3e3;border-bottom:1px solid #e3e3e3;box-sizing:border-box"></div>
<div style="left:604px;top:433px;width:59px;height:20px;background:#fff;border-top:1px solid #a0a0a0;border-left:1px solid #a0a0a0;border-right:1px solid #fff;border-bottom:1px solid #fff;box-sizing:border-box"></div>
<div style="left:605px;top:434px;width:57px;height:18px;border-top:1px solid #696969;border-left:1px solid #696969;border-right:1px solid #e3e3e3;border-bottom:1px solid #e3e3e3;box-sizing:border-box"></div>
<div style="left:721px;top:433px;width:55px;height:19px;background:#fff;border-top:1px solid #a0a0a0;border-left:1px solid #a0a0a0;border-right:1px solid #fff;border-bottom:1px solid #fff;box-sizing:border-box"></div>
<div style="left:722px;top:434px;width:53px;height:17px;border-top:1px solid #696969;border-left:1px solid #696969;border-right:1px solid #e3e3e3;border-bottom:1px solid #e3e3e3;box-sizing:border-box"></div>
<div style="left:758px;top:435px;width:17px;height:16px;background:#f0f0f0;border-top:1px solid #fff;border-left:1px solid #fff;border-right:2px solid #696969;border-bottom:2px solid #696969;box-sizing:border-box"></div>
<svg style="position:absolute;left:762px;top:440px" width="8" height="5"><path d="M0 0 H8 L4 4.5 Z" fill="#000"/></svg>
<div style="left:443px;top:480px;width:344px;height:1px;background:#a0a0a0"></div>
<div style="left:444px;top:481px;width:343px;height:1px;background:#fff"></div>
<div style="left:443px;top:480px;width:1px;height:77px;background:#a0a0a0"></div>
<div style="left:444px;top:481px;width:1px;height:75px;background:#fff"></div>
<div style="left:443px;top:555px;width:344px;height:1px;background:#a0a0a0"></div>
<div style="left:443px;top:556px;width:345px;height:1px;background:#fff"></div>
<div style="left:785px;top:480px;width:1px;height:76px;background:#a0a0a0"></div>
<div style="left:786px;top:480px;width:1px;height:77px;background:#fff"></div>
<div style="left:450px;top:474px;width:100px;height:13px;background:#f0f0f0"></div>
<div style="left:448px;top:496px;width:13px;height:13px;background:#fff;border-top:1px solid #a0a0a0;border-left:1px solid #a0a0a0;border-right:1px solid #fff;border-bottom:1px solid #fff;box-sizing:border-box"></div>
<div style="left:449px;top:497px;width:11px;height:11px;border-top:1px solid #696969;border-left:1px solid #696969;border-right:1px solid #e3e3e3;border-bottom:1px solid #e3e3e3;box-sizing:border-box"></div>
<div style="left:547px;top:492px;width:60px;height:20px;background:#fff;border-top:1px solid #a0a0a0;border-left:1px solid #a0a0a0;border-right:1px solid #fff;border-bottom:1px solid #fff;box-sizing:border-box"></div>
<div style="left:548px;top:493px;width:58px;height:18px;border-top:1px solid #696969;border-left:1px solid #696969;border-right:1px solid #e3e3e3;border-bottom:1px solid #e3e3e3;box-sizing:border-box"></div>
<div style="left:647px;top:490px;width:72px;height:20px;background:#fff;border-top:1px solid #a0a0a0;border-left:1px solid #a0a0a0;border-right:1px solid #fff;border-bottom:1px solid #fff;box-sizing:border-box"></div>
<div style="left:648px;top:491px;width:70px;height:18px;border-top:1px solid #696969;border-left:1px solid #696969;border-right:1px solid #e3e3e3;border-bottom:1px solid #e3e3e3;box-sizing:border-box"></div>
<div style="left:448px;top:530px;width:13px;height:13px;background:#fff;border-top:1px solid #a0a0a0;border-left:1px solid #a0a0a0;border-right:1px solid #fff;border-bottom:1px solid #fff;box-sizing:border-box"></div>
<div style="left:449px;top:531px;width:11px;height:11px;border-top:1px solid #696969;border-left:1px solid #696969;border-right:1px solid #e3e3e3;border-bottom:1px solid #e3e3e3;box-sizing:border-box"></div>
<div style="left:547px;top:525px;width:60px;height:20px;background:#fff;border-top:1px solid #a0a0a0;border-left:1px solid #a0a0a0;border-right:1px solid #fff;border-bottom:1px solid #fff;box-sizing:border-box"></div>
<div style="left:548px;top:526px;width:58px;height:18px;border-top:1px solid #696969;border-left:1px solid #696969;border-right:1px solid #e3e3e3;border-bottom:1px solid #e3e3e3;box-sizing:border-box"></div>
<div style="left:647px;top:523px;width:72px;height:20px;background:#fff;border-top:1px solid #a0a0a0;border-left:1px solid #a0a0a0;border-right:1px solid #fff;border-bottom:1px solid #fff;box-sizing:border-box"></div>
<div style="left:648px;top:524px;width:70px;height:18px;border-top:1px solid #696969;border-left:1px solid #696969;border-right:1px solid #e3e3e3;border-bottom:1px solid #e3e3e3;box-sizing:border-box"></div>
<div style="left:727px;top:516px;width:55px;height:20px;background:#fff;border-top:1px solid #a0a0a0;border-left:1px solid #a0a0a0;border-right:1px solid #fff;border-bottom:1px solid #fff;box-sizing:border-box"></div>
<div style="left:728px;top:517px;width:53px;height:18px;border-top:1px solid #696969;border-left:1px solid #696969;border-right:1px solid #e3e3e3;border-bottom:1px solid #e3e3e3;box-sizing:border-box"></div>
<div style="left:764px;top:518px;width:17px;height:17px;background:#f0f0f0;border-top:1px solid #fff;border-left:1px solid #fff;border-right:2px solid #696969;border-bottom:2px solid #696969;box-sizing:border-box"></div>
<svg style="position:absolute;left:768px;top:523px" width="8" height="5"><path d="M0 0 H8 L4 4.5 Z" fill="#000"/></svg>
<div style="left:4px;top:577px;width:793px;height:1px;background:#ffffff"></div>
<div style="left:344px;top:580px;width:67px;height:17px;border-top:1px solid #a0a0a0;border-left:1px solid #a0a0a0;border-right:1px solid #fff;border-bottom:1px solid #fff"></div>
<div class="t" style="left:347px;top:583px;">0.000s</div>
<div class="t" style="left:451px;top:583px;color:#000">:(</div>
<div class="t" style="left:470.328px;top:583px;color:#000">-</div>
<div class="t" style="left:522.328px;top:583px;color:#000">-</div>
<div class="t" style="left:550.328px;top:583px;color:#000">)</div>
<div style="left:571px;top:580px;width:225px;height:17px;border-top:1px solid #a0a0a0;border-left:1px solid #a0a0a0;border-bottom:1px solid #fff"></div>
<div class="t" style="left:572px;top:583px;">A</div>
<div style="left:579px;top:582px;width:11px;height:11px;background:#808080;border-radius:50%"></div>
<div class="t" style="left:594px;top:583px;">B</div>
<div style="left:601px;top:582px;width:11px;height:11px;background:#808080;border-radius:50%"></div>
<div class="t" style="left:616px;top:583px;">C</div>
<div style="left:623px;top:582px;width:11px;height:11px;background:#808080;border-radius:50%"></div>
<div class="t" style="left:638px;top:583px;">R</div>
<div style="left:645px;top:582px;width:11px;height:11px;background:#808080;border-radius:50%"></div>
<div class="t" style="left:660px;top:583px;">a</div>
<div style="left:667px;top:582px;width:11px;height:11px;background:#808080;border-radius:50%"></div>
<div class="t" style="left:682px;top:583px;">b</div>
<div style="left:689px;top:582px;width:11px;height:11px;background:#808080;border-radius:50%"></div>
<div class="t" style="left:704px;top:583px;">c</div>
<div style="left:711px;top:582px;width:11px;height:11px;background:#808080;border-radius:50%"></div>
<div class="t" style="left:726px;top:583px;">r</div>
<div style="left:733px;top:582px;width:11px;height:11px;background:#808080;border-radius:50%"></div>
<div class="t" style="left:748px;top:583px;">E</div>
<div style="left:755px;top:582px;width:11px;height:11px;background:#808080;border-radius:50%"></div>
<div class="t" style="left:770px;top:583px;">e</div>
<div style="left:777px;top:582px;width:11px;height:11px;background:#808080;border-radius:50%"></div>
<svg style="left:0;top:0" width="800" height="600" shape-rendering="crispEdges"><defs><g id="g0"><path d="M9 3h1v1h-1zM10 4h1v1h-1zM0 5h1v1h-1zM9 5h1v1h-1zM11 7h1v1h-1zM8 8h1v1h-1zM6 9h1v1h-1zM7 10h1v1h-1zM9 11h1v1h-1zM8 12h1v1h-1zM4 13h1v1h-1zM5 14h1v1h-1zM11 14h1v1h-1z" fill-opacity="0.25"/><path d="M1 6h2v1h-2zM2 7h1v1h-1zM2 9h1v1h-1zM8 9h1v1h-1zM1 10h1v1h-1zM6 10h1v1h-1zM0 11h1v1h-1zM8 11h1v1h-1zM5 12h2v1h-2zM9 13h1v1h-1zM10 14h1v1h-1z" fill-opacity="0.5"/><path d="M3 3h1v1h-1zM7 3h1v1h-1zM9 4h1v1h-1zM1 5h1v1h-1zM10 5h1v1h-1zM4 7h1v1h-1zM2 10h1v1h-1zM8 10h1v1h-1zM1 11h1v1h-1zM10 13h1v1h-1zM4 14h1v1h-1z" fill-opacity="0.75"/><path d="M3 4h1v1h-1zM7 4h1v1h-1zM3 5h1v1h-1zM7 5h1v1h-1zM3 6h1v1h-1zM7 6h1v1h-1zM3 7h1v1h-1zM5 7h6v1h-6zM3 8h1v1h-1zM7 8h1v1h-1zM3 9h1v1h-1zM7 9h1v1h-1zM3 10h1v1h-1zM3 11h1v1h-1zM6 11h1v1h-1zM3 12h1v1h-1zM9 12h1v1h-1zM3 13h1v1h-1zM5 13h1v1h-1zM3 14h1v1h-1z"/></g><g id="g1"><path d="M6 4h1v1h-1zM0 5h1v1h-1zM11 5h1v1h-1zM4 6h1v1h-1zM7 6h1v1h-1zM5 7h2v1h-2zM7 8h1v1h-1zM9 8h1v1h-1zM8 9h1v1h-1zM11 9h1v1h-1zM6 10h1v1h-1zM10 10h1v1h-1zM1 11h1v1h-1zM5 11h1v1h-1zM10 11h1v1h-1zM2 12h1v1h-1zM7 12h2v1h-2zM4 13h1v1h-1zM9 13h1v1h-1zM1 14h1v1h-1zM10 14h1v1h-1z" fill-opacity="0.25"/><path d="M5 3h2v1h-2zM5 4h1v1h-1zM5 8h1v1h-1zM1 9h1v1h-1zM3 9h1v1h-1zM5 9h1v1h-1zM1 10h1v1h-1zM5 10h1v1h-1zM2 11h1v1h-1zM1 12h1v1h-1zM6 12h1v1h-1zM9 12h2v1h-2zM3 14h1v1h-1z" fill-opacity="0.5"/><path d="M5 6h2v1h-2zM4 7h1v1h-1zM3 8h2v1h-2zM10 9h1v1h-1zM3 11h1v1h-1zM6 11h1v1h-1zM9 11h1v1h-1zM3 12h1v1h-1zM3 13h1v1h-1zM8 13h1v1h-1zM4 14h5v1h-5z" fill-opacity="0.75"/><path d="M1 5h10v1h-10zM7 7h1v1h-1zM8 8h1v1h-1zM2 9h1v1h-1zM6 9h1v1h-1zM9 9h1v1h-1zM1 13h1v1h-1zM10 13h1v1h-1z"/></g><g id="g2"><path d="M5 3h1v1h-1zM11 4h1v1h-1zM2 5h1v1h-1zM2 6h1v1h-1zM2 7h1v1h-1zM5 7h1v1h-1zM7 7h1v1h-1zM2 8h1v1h-1zM8 8h1v1h-1zM2 10h1v1h-1zM9 10h1v1h-1zM0 13h1v1h-1zM1 14h1v1h-1zM7 14h1v1h-1z" fill-opacity="0.25"/><path d="M1 4h1v1h-1zM1 5h1v1h-1zM1 6h1v1h-1zM3 6h1v1h-1zM1 7h1v1h-1zM9 7h1v1h-1zM1 8h1v1h-1zM5 8h1v1h-1zM1 9h2v1h-2zM6 10h2v1h-2zM6 11h2v1h-2zM6 12h2v1h-2zM6 13h2v1h-2zM0 14h1v1h-1zM4 14h1v1h-1z" fill-opacity="0.5"/><path d="M6 3h1v1h-1zM2 4h4v1h-4zM8 4h3v1h-3zM4 6h6v1h-6zM6 8h1v1h-1zM3 9h4v1h-4zM9 9h2v1h-2zM1 10h1v1h-1zM10 10h1v1h-1zM1 11h1v1h-1zM1 13h1v1h-1zM5 14h1v1h-1z" fill-opacity="0.75"/><path d="M6 4h2v1h-2zM8 7h1v1h-1zM7 8h1v1h-1zM7 9h2v1h-2zM9 11h1v1h-1zM1 12h1v1h-1zM6 14h1v1h-1z"/></g><g id="g3"><path d="M0 4h1v1h-1zM7 5h1v1h-1zM3 6h1v1h-1zM7 6h1v1h-1zM6 7h2v1h-2zM6 8h2v1h-2zM0 9h1v1h-1zM2 9h1v1h-1zM7 9h1v1h-1zM1 10h1v1h-1zM7 10h1v1h-1zM3 11h1v1h-1zM7 11h1v1h-1zM2 14h1v1h-1zM8 14h1v1h-1z" fill-opacity="0.25"/><path d="M2 5h2v1h-2zM8 5h1v1h-1zM8 6h1v1h-1zM8 7h1v1h-1zM1 8h2v1h-2zM8 8h1v1h-1zM8 9h1v1h-1zM2 10h1v1h-1zM4 10h2v1h-2zM8 10h1v1h-1zM8 11h1v1h-1zM4 12h1v1h-1zM3 13h1v1h-1z" fill-opacity="0.5"/><path d="M10 3h1v1h-1zM6 4h1v1h-1zM2 6h1v1h-1zM3 7h2v1h-2zM5 8h1v1h-1zM3 10h1v1h-1zM3 12h1v1h-1zM2 13h1v1h-1zM1 14h1v1h-1zM10 14h1v1h-1z" fill-opacity="0.75"/><path d="M1 4h5v1h-5zM10 4h1v1h-1zM10 5h1v1h-1zM10 6h1v1h-1zM2 7h1v1h-1zM5 7h1v1h-1zM10 7h1v1h-1zM10 8h1v1h-1zM1 9h1v1h-1zM5 9h1v1h-1zM10 9h1v1h-1zM10 10h1v1h-1zM4 11h1v1h-1zM10 11h1v1h-1zM10 12h1v1h-1zM10 13h1v1h-1zM9 14h1v1h-1z"/></g><g id="g4"><path d="M1 3h1v1h-1zM9 3h2v1h-2zM0 7h1v1h-1zM9 8h1v1h-1zM9 9h1v1h-1zM5 10h1v1h-1zM9 10h1v1h-1zM5 11h1v1h-1zM5 12h1v1h-1zM8 12h1v1h-1zM10 12h1v1h-1zM7 13h1v1h-1zM2 14h1v1h-1z" fill-opacity="0.25"/><path d="M2 3h1v1h-1zM2 4h2v1h-2zM10 4h1v1h-1zM11 5h1v1h-1zM4 9h1v1h-1zM7 9h1v1h-1zM6 10h1v1h-1zM8 10h1v1h-1zM6 11h1v1h-1zM8 11h2v1h-2zM3 12h2v1h-2zM7 12h1v1h-1zM11 12h1v1h-1zM4 13h1v1h-1zM6 13h1v1h-1zM10 13h2v1h-2zM9 14h1v1h-1z" fill-opacity="0.5"/><path d="M4 5h1v1h-1zM8 6h1v1h-1zM8 7h1v1h-1zM2 8h1v1h-1zM8 8h1v1h-1zM2 9h1v1h-1zM8 9h1v1h-1zM2 10h1v1h-1zM2 11h1v1h-1zM2 12h1v1h-1zM6 12h1v1h-1zM9 12h1v1h-1zM3 13h1v1h-1z" fill-opacity="0.75"/><path d="M8 3h1v1h-1zM8 4h1v1h-1zM5 5h6v1h-6zM1 7h2v1h-2zM5 9h2v1h-2zM2 13h1v1h-1zM5 13h1v1h-1zM9 13h1v1h-1zM10 14h1v1h-1z"/></g><g id="g5"><path d="M7 3h1v1h-1zM0 4h1v1h-1zM1 5h1v1h-1zM4 5h1v1h-1zM8 5h1v1h-1zM4 6h1v1h-1zM5 9h3v1h-3zM1 11h1v1h-1zM10 11h1v1h-1zM0 12h1v1h-1zM3 13h1v1h-1zM11 13h1v1h-1z" fill-opacity="0.25"/><path d="M8 3h1v1h-1zM4 4h1v1h-1zM3 5h1v1h-1zM6 5h2v1h-2zM3 6h1v1h-1zM5 6h1v1h-1zM9 6h1v1h-1zM3 7h2v1h-2zM6 7h1v1h-1zM10 7h2v1h-2zM8 9h1v1h-1zM10 9h1v1h-1zM2 11h2v1h-2zM9 11h1v1h-1zM1 12h1v1h-1zM4 13h2v1h-2z" fill-opacity="0.5"/><path d="M1 4h2v1h-2zM9 5h1v1h-1zM1 6h1v1h-1zM6 6h1v1h-1zM10 6h1v1h-1zM1 7h1v1h-1zM5 7h1v1h-1zM7 7h3v1h-3zM1 8h1v1h-1zM3 8h1v1h-1zM2 9h1v1h-1zM4 9h1v1h-1zM4 10h1v1h-1zM6 10h1v1h-1zM8 10h1v1h-1zM10 10h1v1h-1zM4 11h1v1h-1zM6 11h1v1h-1zM8 11h1v1h-1zM4 12h1v1h-1zM9 12h1v1h-1zM6 13h3v1h-3zM10 13h1v1h-1zM2 14h2v1h-2z" fill-opacity="0.75"/><path d="M3 4h1v1h-1zM7 4h2v1h-2zM1 9h1v1h-1zM3 9h1v1h-1zM9 13h1v1h-1z"/></g><g id="g6"><path d="M6 3h1v1h-1zM5 4h1v1h-1zM0 5h1v1h-1zM2 6h1v1h-1zM9 6h1v1h-1zM5 9h2v1h-2zM4 10h1v1h-1zM7 10h1v1h-1zM4 11h1v1h-1zM7 11h1v1h-1zM5 12h2v1h-2zM4 13h1v1h-1zM7 13h1v1h-1zM0 14h1v1h-1zM2 14h1v1h-1zM9 14h1v1h-1zM11 14h1v1h-1z" fill-opacity="0.25"/><path d="M11 5h1v1h-1zM3 6h1v1h-1zM3 8h2v1h-2zM7 8h2v1h-2zM3 12h1v1h-1zM8 12h1v1h-1zM1 13h1v1h-1zM10 13h1v1h-1z" fill-opacity="0.5"/><path d="M5 3h1v1h-1zM6 4h1v1h-1zM8 6h1v1h-1zM4 9h1v1h-1zM3 13h1v1h-1zM8 13h1v1h-1zM1 14h1v1h-1zM10 14h1v1h-1z" fill-opacity="0.75"/><path d="M1 5h10v1h-10zM3 7h1v1h-1zM8 7h1v1h-1zM7 9h1v1h-1zM5 10h2v1h-2zM5 11h2v1h-2zM4 12h1v1h-1zM7 12h1v1h-1zM2 13h1v1h-1zM9 13h1v1h-1z"/></g><g id="g7"><path d="M2 4h1v1h-1zM3 5h2v1h-2zM1 6h1v1h-1zM0 8h2v1h-2zM4 8h1v1h-1zM3 9h1v1h-1zM11 9h1v1h-1z" fill-opacity="0.25"/><path d="M7 3h1v1h-1zM4 6h1v1h-1z" fill-opacity="0.5"/><path d="M3 3h1v1h-1zM3 4h1v1h-1zM7 4h1v1h-1zM2 5h1v1h-1zM5 5h1v1h-1zM7 5h1v1h-1zM10 6h1v1h-1zM7 7h1v1h-1zM7 8h1v1h-1zM7 10h1v1h-1zM7 11h1v1h-1zM7 12h1v1h-1zM7 13h1v1h-1zM2 14h1v1h-1zM7 14h1v1h-1z" fill-opacity="0.75"/><path d="M5 4h1v1h-1zM2 6h1v1h-1zM5 6h5v1h-5zM1 7h2v1h-2zM4 7h1v1h-1zM2 8h1v1h-1zM2 9h1v1h-1zM4 9h7v1h-7zM2 10h1v1h-1zM2 11h1v1h-1zM2 12h1v1h-1zM2 13h1v1h-1z"/></g><g id="g8"><path d="M4 3h1v1h-1zM0 4h1v1h-1zM6 4h1v1h-1zM9 4h1v1h-1zM4 5h1v1h-1zM10 5h1v1h-1zM10 6h1v1h-1zM0 7h1v1h-1zM6 7h1v1h-1zM8 8h1v1h-1zM5 9h2v1h-2zM8 9h2v1h-2zM2 10h1v1h-1zM1 11h1v1h-1zM10 11h1v1h-1zM1 12h1v1h-1zM10 12h1v1h-1zM1 13h1v1h-1zM7 13h1v1h-1zM10 13h1v1h-1zM6 14h1v1h-1z" fill-opacity="0.25"/><path d="M2 8h2v1h-2zM9 8h1v1h-1zM1 9h1v1h-1zM5 10h2v1h-2zM5 12h2v1h-2zM9 12h1v1h-1zM5 13h2v1h-2zM5 14h1v1h-1z" fill-opacity="0.5"/><path d="M3 3h1v1h-1zM7 3h4v1h-4zM1 4h2v1h-2zM4 4h2v1h-2zM10 4h1v1h-1zM3 5h1v1h-1zM9 5h1v1h-1zM1 6h2v1h-2zM4 6h2v1h-2zM9 6h1v1h-1zM1 7h2v1h-2zM4 7h2v1h-2zM1 10h1v1h-1zM3 11h2v1h-2zM7 11h2v1h-2zM2 12h1v1h-1zM2 13h1v1h-1zM8 13h2v1h-2z" fill-opacity="0.75"/><path d="M3 4h1v1h-1zM7 4h1v1h-1zM7 5h1v1h-1zM3 6h1v1h-1zM7 6h1v1h-1zM3 7h1v1h-1zM7 7h1v1h-1zM10 7h1v1h-1zM7 8h1v1h-1zM10 8h1v1h-1zM2 9h1v1h-1zM7 9h1v1h-1zM2 11h1v1h-1zM5 11h2v1h-2zM9 11h1v1h-1z"/></g><g id="g9"><path d="M7 3h2v1h-2zM5 4h1v1h-1zM5 5h1v1h-1zM5 7h1v1h-1zM8 7h1v1h-1zM5 8h1v1h-1zM8 8h1v1h-1zM5 9h1v1h-1zM5 10h1v1h-1zM0 12h1v1h-1zM0 13h1v1h-1zM2 13h1v1h-1zM9 13h1v1h-1zM4 14h1v1h-1zM10 14h1v1h-1z" fill-opacity="0.25"/><path d="M7 4h2v1h-2zM7 5h2v1h-2zM5 6h1v1h-1zM7 7h1v1h-1zM5 11h3v1h-3zM5 12h1v1h-1zM1 13h1v1h-1zM6 13h1v1h-1zM5 14h1v1h-1z" fill-opacity="0.5"/><path d="M1 4h1v1h-1zM3 4h1v1h-1zM1 5h1v1h-1zM4 5h1v1h-1zM1 6h3v1h-3zM1 7h1v1h-1zM4 7h1v1h-1zM10 7h1v1h-1zM1 8h1v1h-1zM4 8h1v1h-1zM7 8h1v1h-1zM10 8h1v1h-1zM1 9h3v1h-3zM7 9h1v1h-1zM10 9h1v1h-1zM1 10h1v1h-1zM4 10h1v1h-1zM7 10h1v1h-1zM1 11h1v1h-1zM4 11h1v1h-1zM2 12h1v1h-1zM4 12h1v1h-1zM5 13h1v1h-1zM10 13h1v1h-1zM8 14h2v1h-2z" fill-opacity="0.75"/><path d="M2 4h1v1h-1zM4 4h1v1h-1zM4 6h1v1h-1zM6 6h5v1h-5zM4 9h1v1h-1zM10 10h1v1h-1zM10 11h1v1h-1zM1 12h1v1h-1zM3 12h1v1h-1zM6 12h1v1h-1zM10 12h1v1h-1z"/></g><path id="a10" d="M2 2h1v1h-1zM1 3h2v1h-2zM2 4h1v1h-1zM2 5h1v1h-1zM2 6h1v1h-1zM2 7h1v1h-1zM2 8h1v1h-1zM1 9h3v1h-3z"/><path id="a11" d="M2 4h1v1h-1zM2 9h1v1h-1z"/><path id="g12" d="M0 3h11v1h-11zM5 4h1v1h-1zM5 5h1v1h-1zM2 6h1v1h-1zM5 6h1v1h-1zM2 7h1v1h-1zM5 7h5v1h-5zM2 8h1v1h-1zM5 8h1v1h-1zM2 9h1v1h-1zM5 9h1v1h-1zM2 10h1v1h-1zM5 10h1v1h-1zM2 11h1v1h-1zM5 11h1v1h-1zM0 12h11v1h-11z"/><path id="g13" d="M2 2h1v1h-1zM5 2h1v1h-1zM8 2h1v1h-1zM1 3h10v1h-10zM1 4h1v1h-1zM10 4h1v1h-1zM0 5h1v1h-1zM3 5h6v1h-6zM10 5h1v1h-1zM3 6h1v1h-1zM8 6h1v1h-1zM3 7h6v1h-6zM5 8h1v1h-1zM2 9h8v1h-8zM2 10h1v1h-1zM5 10h1v1h-1zM9 10h1v1h-1zM2 11h1v1h-1zM5 11h1v1h-1zM8 11h2v1h-2zM5 12h1v1h-1z"/><path id="g14" d="M5 2h1v1h-1zM0 3h11v1h-11zM5 4h1v1h-1zM4 5h1v1h-1zM6 5h1v1h-1zM2 6h3v1h-3zM7 6h2v1h-2zM0 7h2v1h-2zM5 7h1v1h-1zM9 7h2v1h-2zM3 9h1v1h-1zM5 9h1v1h-1zM9 9h1v1h-1zM1 10h1v1h-1zM3 10h1v1h-1zM6 10h1v1h-1zM8 10h1v1h-1zM10 10h1v1h-1zM1 11h1v1h-1zM3 11h1v1h-1zM8 11h1v1h-1zM10 11h1v1h-1zM0 12h1v1h-1zM4 12h5v1h-5z"/><path id="a15" d="M1 2h3v1h-3zM0 3h1v1h-1zM4 3h1v1h-1zM4 4h1v1h-1zM3 5h1v1h-1zM2 6h1v1h-1zM1 7h1v1h-1zM0 8h1v1h-1zM0 9h5v1h-5z"/><path id="g16" d="M3 2h1v1h-1zM7 2h1v1h-1zM3 3h1v1h-1zM7 3h1v1h-1zM0 4h6v1h-6zM7 4h4v1h-4zM3 5h1v1h-1zM7 5h1v1h-1zM9 5h1v1h-1zM3 6h1v1h-1zM6 6h1v1h-1zM9 6h1v1h-1zM1 7h5v1h-5zM7 7h1v1h-1zM9 7h1v1h-1zM1 8h1v1h-1zM4 8h1v1h-1zM7 8h1v1h-1zM9 8h1v1h-1zM1 9h1v1h-1zM4 9h1v1h-1zM8 9h1v1h-1zM1 10h1v1h-1zM4 10h1v1h-1zM8 10h1v1h-1zM1 11h4v1h-4zM7 11h1v1h-1zM9 11h1v1h-1zM1 12h1v1h-1zM4 12h3v1h-3zM10 12h1v1h-1z"/><path id="g17" d="M0 2h4v1h-4zM7 2h1v1h-1zM0 3h1v1h-1zM3 3h8v1h-8zM0 4h1v1h-1zM2 4h1v1h-1zM5 4h1v1h-1zM8 4h1v1h-1zM0 5h2v1h-2zM4 5h7v1h-7zM0 6h1v1h-1zM2 6h1v1h-1zM5 6h1v1h-1zM9 6h1v1h-1zM0 7h1v1h-1zM3 7h1v1h-1zM5 7h5v1h-5zM0 8h1v1h-1zM3 8h1v1h-1zM5 8h1v1h-1zM9 8h1v1h-1zM0 9h4v1h-4zM5 9h5v1h-5zM0 10h1v1h-1zM2 10h1v1h-1zM7 10h1v1h-1zM0 11h1v1h-1zM4 11h7v1h-7zM0 12h1v1h-1zM7 12h1v1h-1z"/><path id="g18" d="M2 2h1v1h-1zM5 2h1v1h-1zM2 3h1v1h-1zM5 3h1v1h-1zM2 4h8v1h-8zM1 5h1v1h-1zM5 5h1v1h-1zM5 6h1v1h-1zM0 7h11v1h-11zM5 8h1v1h-1zM4 9h1v1h-1zM6 9h1v1h-1zM3 10h1v1h-1zM7 10h1v1h-1zM2 11h1v1h-1zM8 11h1v1h-1zM0 12h2v1h-2zM9 12h2v1h-2z"/><path id="g19" d="M2 2h9v1h-9zM2 3h1v1h-1zM2 4h1v1h-1zM6 4h1v1h-1zM2 5h1v1h-1zM6 5h1v1h-1zM2 6h1v1h-1zM6 6h1v1h-1zM2 7h8v1h-8zM2 8h1v1h-1zM6 8h1v1h-1zM2 9h1v1h-1zM6 9h1v1h-1zM8 9h1v1h-1zM1 10h1v1h-1zM6 10h1v1h-1zM9 10h1v1h-1zM1 11h1v1h-1zM6 11h1v1h-1zM0 12h1v1h-1zM2 12h9v1h-9z"/><path id="g20" d="M0 2h4v1h-4zM6 2h1v1h-1zM8 2h1v1h-1zM0 3h1v1h-1zM3 3h2v1h-2zM6 3h1v1h-1zM8 3h1v1h-1zM10 3h1v1h-1zM0 4h1v1h-1zM3 4h1v1h-1zM5 4h2v1h-2zM8 4h2v1h-2zM0 5h4v1h-4zM6 5h1v1h-1zM8 5h1v1h-1zM2 6h1v1h-1zM6 6h1v1h-1zM8 6h1v1h-1zM2 7h1v1h-1zM5 7h2v1h-2zM8 7h2v1h-2zM0 8h1v1h-1zM2 8h3v1h-3zM6 8h1v1h-1zM8 8h1v1h-1zM10 8h1v1h-1zM0 9h1v1h-1zM2 9h1v1h-1zM6 9h1v1h-1zM8 9h1v1h-1zM0 10h1v1h-1zM2 10h3v1h-3zM6 10h1v1h-1zM8 10h1v1h-1zM10 10h1v1h-1zM0 11h2v1h-2zM5 11h1v1h-1zM8 11h1v1h-1zM10 11h1v1h-1zM4 12h1v1h-1zM9 12h2v1h-2z"/><path id="g21" d="M2 2h1v1h-1zM5 2h6v1h-6zM3 3h1v1h-1zM10 3h1v1h-1zM1 4h1v1h-1zM3 4h6v1h-6zM10 4h1v1h-1zM1 5h1v1h-1zM3 5h1v1h-1zM5 5h1v1h-1zM8 5h1v1h-1zM10 5h1v1h-1zM1 6h1v1h-1zM3 6h6v1h-6zM10 6h1v1h-1zM1 7h1v1h-1zM3 7h1v1h-1zM5 7h1v1h-1zM8 7h1v1h-1zM10 7h1v1h-1zM1 8h1v1h-1zM3 8h6v1h-6zM10 8h1v1h-1zM1 9h1v1h-1zM3 9h1v1h-1zM5 9h1v1h-1zM8 9h1v1h-1zM10 9h1v1h-1zM1 10h1v1h-1zM5 10h1v1h-1zM10 10h1v1h-1zM1 11h1v1h-1zM5 11h1v1h-1zM10 11h1v1h-1zM1 12h1v1h-1zM9 12h2v1h-2z"/><path id="a22" d="M1 2h3v1h-3zM0 3h1v1h-1zM4 3h1v1h-1zM4 4h1v1h-1zM2 5h2v1h-2zM4 6h1v1h-1zM4 7h1v1h-1zM0 8h1v1h-1zM4 8h1v1h-1zM1 9h3v1h-3z"/><path id="g23" d="M5 2h1v1h-1zM4 3h1v1h-1zM6 3h1v1h-1zM3 4h1v1h-1zM7 4h1v1h-1zM2 5h1v1h-1zM8 5h1v1h-1zM0 6h2v1h-2zM3 6h5v1h-5zM9 6h2v1h-2zM2 8h7v1h-7zM2 9h1v1h-1zM8 9h1v1h-1zM2 10h1v1h-1zM8 10h1v1h-1zM2 11h7v1h-7zM2 12h1v1h-1zM8 12h1v1h-1z"/><path id="a24" d="M3 2h1v1h-1zM2 3h2v1h-2zM1 4h1v1h-1zM3 4h1v1h-1zM1 5h1v1h-1zM3 5h1v1h-1zM0 6h1v1h-1zM3 6h1v1h-1zM1 7h4v1h-4zM3 8h1v1h-1zM3 9h2v1h-2z"/><path id="g25" d="M7 2h3v1h-3zM2 3h5v1h-5zM2 4h1v1h-1zM2 5h9v1h-9zM2 6h1v1h-1zM2 7h1v1h-1zM2 8h1v1h-1zM4 8h6v1h-6zM2 9h1v1h-1zM4 9h1v1h-1zM9 9h1v1h-1zM1 10h1v1h-1zM4 10h1v1h-1zM9 10h1v1h-1zM1 11h1v1h-1zM4 11h6v1h-6zM0 12h1v1h-1zM4 12h1v1h-1zM9 12h1v1h-1z"/><path id="g26" d="M5 2h1v1h-1zM5 3h1v1h-1zM0 4h11v1h-11zM4 5h3v1h-3zM3 6h1v1h-1zM5 6h1v1h-1zM7 6h1v1h-1zM3 7h1v1h-1zM5 7h1v1h-1zM7 7h1v1h-1zM2 8h1v1h-1zM5 8h1v1h-1zM8 8h1v1h-1zM1 9h1v1h-1zM5 9h1v1h-1zM9 9h1v1h-1zM0 10h1v1h-1zM3 10h5v1h-5zM10 10h1v1h-1zM5 11h1v1h-1zM5 12h1v1h-1z"/><path id="g27" d="M3 2h1v1h-1zM7 2h2v1h-2zM0 3h1v1h-1zM3 3h1v1h-1zM7 3h1v1h-1zM9 3h1v1h-1zM1 4h1v1h-1zM3 4h1v1h-1zM7 4h1v1h-1zM1 5h1v1h-1zM3 5h8v1h-8zM3 6h1v1h-1zM7 6h1v1h-1zM3 7h1v1h-1zM7 7h1v1h-1zM2 8h2v1h-2zM6 8h1v1h-1zM8 8h1v1h-1zM0 9h2v1h-2zM3 9h1v1h-1zM6 9h1v1h-1zM8 9h1v1h-1zM3 10h1v1h-1zM5 10h1v1h-1zM9 10h1v1h-1zM3 11h1v1h-1zM5 11h1v1h-1zM9 11h1v1h-1zM3 12h2v1h-2zM10 12h1v1h-1z"/><path id="g28" d="M1 2h1v1h-1zM7 2h1v1h-1zM1 3h1v1h-1zM6 3h1v1h-1zM8 3h1v1h-1zM0 4h4v1h-4zM5 4h1v1h-1zM9 4h1v1h-1zM1 5h1v1h-1zM4 5h1v1h-1zM6 5h3v1h-3zM10 5h1v1h-1zM0 6h1v1h-1zM2 6h1v1h-1zM0 7h7v1h-7zM10 7h1v1h-1zM2 8h1v1h-1zM4 8h1v1h-1zM6 8h1v1h-1zM8 8h1v1h-1zM10 8h1v1h-1zM2 9h5v1h-5zM8 9h1v1h-1zM10 9h1v1h-1zM0 10h3v1h-3zM4 10h1v1h-1zM6 10h1v1h-1zM8 10h1v1h-1zM10 10h1v1h-1zM2 11h1v1h-1zM4 11h3v1h-3zM8 11h1v1h-1zM10 11h1v1h-1zM2 12h1v1h-1zM4 12h1v1h-1zM6 12h1v1h-1zM9 12h2v1h-2z"/><path id="g29" d="M5 2h1v1h-1zM1 3h1v1h-1zM5 3h1v1h-1zM9 3h1v1h-1zM1 4h1v1h-1zM5 4h1v1h-1zM9 4h1v1h-1zM1 5h1v1h-1zM5 5h1v1h-1zM9 5h1v1h-1zM1 6h9v1h-9zM5 7h1v1h-1zM0 8h1v1h-1zM5 8h1v1h-1zM10 8h1v1h-1zM0 9h1v1h-1zM5 9h1v1h-1zM10 9h1v1h-1zM0 10h1v1h-1zM5 10h1v1h-1zM10 10h1v1h-1zM0 11h1v1h-1zM5 11h1v1h-1zM10 11h1v1h-1zM0 12h11v1h-11z"/><path id="g30" d="M3 2h1v1h-1zM3 3h7v1h-7zM3 4h1v1h-1zM8 4h1v1h-1zM2 5h1v1h-1zM4 5h1v1h-1zM7 5h1v1h-1zM1 6h1v1h-1zM5 6h2v1h-2zM5 7h1v1h-1zM3 8h7v1h-7zM0 9h4v1h-4zM9 9h1v1h-1zM3 10h1v1h-1zM9 10h1v1h-1zM3 11h1v1h-1zM9 11h1v1h-1zM3 12h7v1h-7z"/><path id="g31" d="M4 2h1v1h-1zM3 3h1v1h-1zM7 3h1v1h-1zM2 4h7v1h-7zM4 5h1v1h-1zM0 6h11v1h-11zM2 7h1v1h-1zM5 7h1v1h-1zM8 7h1v1h-1zM0 8h2v1h-2zM3 8h2v1h-2zM9 8h2v1h-2zM5 9h2v1h-2zM3 10h2v1h-2zM8 10h1v1h-1zM6 11h2v1h-2zM2 12h4v1h-4z"/><path id="g32" d="M0 2h1v1h-1zM3 2h1v1h-1zM5 2h1v1h-1zM7 2h1v1h-1zM1 3h1v1h-1zM3 3h2v1h-2zM7 3h1v1h-1zM0 4h6v1h-6zM7 4h4v1h-4zM2 5h2v1h-2zM6 5h2v1h-2zM9 5h1v1h-1zM1 6h1v1h-1zM3 6h2v1h-2zM7 6h1v1h-1zM9 6h1v1h-1zM0 7h1v1h-1zM3 7h1v1h-1zM5 7h1v1h-1zM7 7h1v1h-1zM9 7h1v1h-1zM0 8h6v1h-6zM7 8h1v1h-1zM9 8h1v1h-1zM2 9h1v1h-1zM4 9h1v1h-1zM7 9h1v1h-1zM9 9h1v1h-1zM1 10h2v1h-2zM4 10h1v1h-1zM8 10h1v1h-1zM3 11h1v1h-1zM7 11h1v1h-1zM9 11h1v1h-1zM0 12h3v1h-3zM4 12h3v1h-3zM10 12h1v1h-1z"/><path id="g33" d="M2 2h1v1h-1zM5 2h6v1h-6zM2 3h1v1h-1zM0 4h5v1h-5zM6 4h4v1h-4zM0 5h1v1h-1zM2 5h1v1h-1zM4 5h1v1h-1zM6 5h1v1h-1zM9 5h1v1h-1zM0 6h1v1h-1zM2 6h1v1h-1zM4 6h1v1h-1zM6 6h4v1h-4zM0 7h1v1h-1zM2 7h1v1h-1zM4 7h1v1h-1zM0 8h1v1h-1zM2 8h1v1h-1zM4 8h7v1h-7zM0 9h1v1h-1zM2 9h4v1h-4zM7 9h1v1h-1zM10 9h1v1h-1zM2 10h1v1h-1zM5 10h6v1h-6zM2 11h1v1h-1zM5 11h1v1h-1zM7 11h1v1h-1zM10 11h1v1h-1zM2 12h1v1h-1zM5 12h6v1h-6z"/><path id="g34" d="M3 2h1v1h-1zM7 2h1v1h-1zM3 3h8v1h-8zM2 4h1v1h-1zM6 4h1v1h-1zM2 5h1v1h-1zM5 5h5v1h-5zM1 6h2v1h-2zM5 6h1v1h-1zM9 6h1v1h-1zM0 7h1v1h-1zM2 7h1v1h-1zM5 7h5v1h-5zM2 8h1v1h-1zM5 8h1v1h-1zM9 8h1v1h-1zM2 9h1v1h-1zM5 9h3v1h-3zM9 9h1v1h-1zM2 10h1v1h-1zM5 10h1v1h-1zM7 10h3v1h-3zM2 11h1v1h-1zM5 11h1v1h-1zM9 11h1v1h-1zM2 12h1v1h-1zM4 12h7v1h-7z"/><path id="g35" d="M3 2h1v1h-1zM6 2h5v1h-5zM3 3h1v1h-1zM6 3h1v1h-1zM10 3h1v1h-1zM1 4h6v1h-6zM10 4h1v1h-1zM3 5h1v1h-1zM6 5h5v1h-5zM3 6h1v1h-1zM6 6h1v1h-1zM10 6h1v1h-1zM2 7h3v1h-3zM6 7h1v1h-1zM10 7h1v1h-1zM1 8h1v1h-1zM3 8h1v1h-1zM5 8h6v1h-6zM0 9h1v1h-1zM3 9h1v1h-1zM6 9h1v1h-1zM10 9h1v1h-1zM3 10h1v1h-1zM6 10h1v1h-1zM10 10h1v1h-1zM3 11h1v1h-1zM6 11h5v1h-5zM3 12h1v1h-1zM6 12h1v1h-1zM10 12h1v1h-1z"/><path id="g36" d="M3 2h1v1h-1zM6 2h1v1h-1zM3 3h1v1h-1zM7 3h1v1h-1zM2 4h1v1h-1zM2 5h1v1h-1zM4 5h7v1h-7zM1 6h2v1h-2zM0 7h1v1h-1zM2 7h1v1h-1zM5 7h1v1h-1zM9 7h1v1h-1zM2 8h1v1h-1zM6 8h1v1h-1zM9 8h1v1h-1zM2 9h1v1h-1zM6 9h1v1h-1zM8 9h1v1h-1zM2 10h1v1h-1zM8 10h1v1h-1zM2 11h1v1h-1zM7 11h1v1h-1zM2 12h1v1h-1zM4 12h7v1h-7z"/><path id="g37" d="M3 2h1v1h-1zM6 2h5v1h-5zM1 3h1v1h-1zM3 3h1v1h-1zM8 3h1v1h-1zM1 4h1v1h-1zM3 4h8v1h-8zM1 5h1v1h-1zM3 5h1v1h-1zM6 5h1v1h-1zM10 5h1v1h-1zM0 6h7v1h-7zM8 6h1v1h-1zM10 6h1v1h-1zM3 7h1v1h-1zM6 7h1v1h-1zM8 7h1v1h-1zM10 7h1v1h-1zM1 8h1v1h-1zM3 8h1v1h-1zM5 8h2v1h-2zM8 8h1v1h-1zM10 8h1v1h-1zM1 9h1v1h-1zM3 9h2v1h-2zM6 9h1v1h-1zM8 9h1v1h-1zM10 9h1v1h-1zM0 10h1v1h-1zM3 10h1v1h-1zM6 10h1v1h-1zM8 10h1v1h-1zM10 10h1v1h-1zM2 11h1v1h-1zM7 11h1v1h-1zM9 11h1v1h-1zM0 12h2v1h-2zM5 12h2v1h-2zM10 12h1v1h-1z"/><path id="g38" d="M5 2h1v1h-1zM0 3h11v1h-11zM0 4h1v1h-1zM4 4h1v1h-1zM9 4h1v1h-1zM1 5h1v1h-1zM3 5h1v1h-1zM6 5h1v1h-1zM8 5h1v1h-1zM4 6h2v1h-2zM2 7h1v1h-1zM4 7h1v1h-1zM6 7h1v1h-1zM8 7h1v1h-1zM0 8h2v1h-2zM3 8h5v1h-5zM9 8h1v1h-1zM5 9h1v1h-1zM0 10h11v1h-11zM5 11h1v1h-1zM5 12h1v1h-1z"/><path id="a39" d="M0 2h2v1h-2zM3 2h2v1h-2zM1 3h1v1h-1zM4 3h1v1h-1zM1 4h1v1h-1zM4 4h1v1h-1zM1 5h1v1h-1zM4 5h1v1h-1zM1 6h1v1h-1zM4 6h1v1h-1zM1 7h1v1h-1zM4 7h1v1h-1zM1 8h1v1h-1zM4 8h1v1h-1zM2 9h2v1h-2z"/><path id="a40" d="M2 2h1v1h-1zM2 3h1v1h-1zM1 4h1v1h-1zM3 4h1v1h-1zM1 5h1v1h-1zM3 5h1v1h-1zM1 6h1v1h-1zM3 6h1v1h-1zM1 7h3v1h-3zM0 8h1v1h-1zM4 8h1v1h-1zM0 9h2v1h-2zM3 9h2v1h-2z"/><path id="a41" d="M1 2h3v1h-3zM0 3h1v1h-1zM4 3h1v1h-1zM0 4h1v1h-1zM4 4h1v1h-1zM0 5h1v1h-1zM4 5h1v1h-1zM0 6h1v1h-1zM4 6h1v1h-1zM0 7h1v1h-1zM4 7h1v1h-1zM0 8h1v1h-1zM4 8h1v1h-1zM1 9h3v1h-3z"/><path id="a42" d="M1 9h1v1h-1z"/><path id="a43" d="M0 2h5v1h-5zM0 3h1v1h-1zM0 4h1v1h-1zM0 5h4v1h-4zM4 6h1v1h-1zM4 7h1v1h-1zM0 8h1v1h-1zM4 8h1v1h-1zM1 9h3v1h-3z"/><path id="a44" d="M0 2h4v1h-4zM1 3h1v1h-1zM4 3h1v1h-1zM1 4h1v1h-1zM4 4h1v1h-1zM1 5h3v1h-3zM1 6h1v1h-1zM4 6h1v1h-1zM1 7h1v1h-1zM4 7h1v1h-1zM1 8h1v1h-1zM4 8h1v1h-1zM0 9h4v1h-4z"/><path id="a45" d="M0 5h5v1h-5z"/><path id="a46" d="M1 2h4v1h-4zM0 3h1v1h-1zM4 3h1v1h-1zM0 4h1v1h-1zM0 5h1v1h-1zM0 6h1v1h-1zM0 7h1v1h-1zM0 8h1v1h-1zM4 8h1v1h-1zM1 9h3v1h-3z"/><path id="a47" d="M0 2h5v1h-5zM2 3h1v1h-1zM2 4h1v1h-1zM2 5h1v1h-1zM2 6h1v1h-1zM2 7h1v1h-1zM2 8h1v1h-1zM0 9h5v1h-5z"/><path id="a48" d="M2 5h2v1h-2zM1 6h1v1h-1zM4 6h1v1h-1zM2 7h3v1h-3zM1 8h1v1h-1zM4 8h1v1h-1zM2 9h4v1h-4z"/><path id="a49" d="M0 2h2v1h-2zM1 3h1v1h-1zM1 4h1v1h-1zM1 5h3v1h-3zM1 6h1v1h-1zM4 6h1v1h-1zM1 7h1v1h-1zM4 7h1v1h-1zM1 8h1v1h-1zM4 8h1v1h-1zM1 9h3v1h-3z"/><path id="a50" d="M2 5h3v1h-3zM1 6h1v1h-1zM4 6h1v1h-1zM1 7h1v1h-1zM1 8h1v1h-1zM2 9h3v1h-3z"/><path id="g51" d="M1 2h1v1h-1zM7 2h1v1h-1zM9 2h1v1h-1zM2 3h1v1h-1zM7 3h1v1h-1zM10 3h1v1h-1zM3 4h8v1h-8zM7 5h1v1h-1zM0 6h3v1h-3zM4 6h4v1h-4zM2 7h1v1h-1zM5 7h1v1h-1zM7 7h1v1h-1zM2 8h1v1h-1zM5 8h1v1h-1zM7 8h1v1h-1zM2 9h1v1h-1zM5 9h1v1h-1zM8 9h1v1h-1zM10 9h1v1h-1zM2 10h1v1h-1zM5 10h2v1h-2zM8 10h1v1h-1zM10 10h1v1h-1zM2 11h3v1h-3zM9 11h2v1h-2zM2 12h1v1h-1zM10 12h1v1h-1z"/><path id="g52" d="M0 2h4v1h-4zM7 2h1v1h-1zM3 3h1v1h-1zM7 3h1v1h-1zM1 4h1v1h-1zM3 4h1v1h-1zM6 4h1v1h-1zM8 4h1v1h-1zM1 5h1v1h-1zM3 5h3v1h-3zM9 5h2v1h-2zM1 6h1v1h-1zM3 6h1v1h-1zM6 6h3v1h-3zM1 7h4v1h-4zM4 8h1v1h-1zM6 8h1v1h-1zM9 8h1v1h-1zM2 9h4v1h-4zM7 9h1v1h-1zM9 9h1v1h-1zM0 10h2v1h-2zM4 10h1v1h-1zM6 10h1v1h-1zM8 10h1v1h-1zM4 11h1v1h-1zM7 11h1v1h-1zM2 12h2v1h-2zM5 12h6v1h-6z"/><path id="g53" d="M1 2h1v1h-1zM5 2h4v1h-4zM2 3h1v1h-1zM5 3h1v1h-1zM8 3h1v1h-1zM5 4h1v1h-1zM8 4h1v1h-1zM4 5h1v1h-1zM8 5h3v1h-3zM0 6h3v1h-3zM2 7h1v1h-1zM4 7h6v1h-6zM2 8h1v1h-1zM5 8h1v1h-1zM9 8h1v1h-1zM2 9h1v1h-1zM6 9h1v1h-1zM8 9h1v1h-1zM2 10h2v1h-2zM7 10h1v1h-1zM2 11h1v1h-1zM6 11h1v1h-1zM8 11h1v1h-1zM3 12h3v1h-3zM9 12h2v1h-2z"/><path id="g54" d="M1 2h9v1h-9zM1 3h1v1h-1zM4 3h1v1h-1zM6 3h1v1h-1zM9 3h1v1h-1zM1 4h9v1h-9zM5 5h1v1h-1zM0 6h11v1h-11zM2 7h1v1h-1zM8 7h1v1h-1zM2 8h7v1h-7zM2 9h1v1h-1zM8 9h1v1h-1zM2 10h7v1h-7zM2 11h1v1h-1zM8 11h1v1h-1zM0 12h11v1h-11z"/><path id="g55" d="M2 2h1v1h-1zM5 2h6v1h-6zM2 3h1v1h-1zM5 3h1v1h-1zM10 3h1v1h-1zM0 4h6v1h-6zM10 4h1v1h-1zM2 5h1v1h-1zM5 5h6v1h-6zM2 6h1v1h-1zM4 6h2v1h-2zM8 6h1v1h-1zM2 7h2v1h-2zM5 7h6v1h-6zM1 8h2v1h-2zM5 8h1v1h-1zM8 8h1v1h-1zM0 9h1v1h-1zM2 9h1v1h-1zM5 9h6v1h-6zM2 10h1v1h-1zM4 10h3v1h-3zM10 10h1v1h-1zM0 11h1v1h-1zM2 11h1v1h-1zM4 11h1v1h-1zM6 11h1v1h-1zM10 11h1v1h-1zM1 12h1v1h-1zM3 12h1v1h-1zM6 12h5v1h-5z"/><path id="g56" d="M5 2h6v1h-6zM0 3h5v1h-5zM7 3h1v1h-1zM2 4h1v1h-1zM5 4h6v1h-6zM2 5h1v1h-1zM5 5h1v1h-1zM10 5h1v1h-1zM2 6h1v1h-1zM5 6h1v1h-1zM7 6h1v1h-1zM10 6h1v1h-1zM2 7h1v1h-1zM5 7h1v1h-1zM7 7h1v1h-1zM10 7h1v1h-1zM2 8h1v1h-1zM5 8h1v1h-1zM7 8h1v1h-1zM10 8h1v1h-1zM2 9h4v1h-4zM7 9h1v1h-1zM10 9h1v1h-1zM0 10h2v1h-2zM7 10h2v1h-2zM6 11h1v1h-1zM9 11h1v1h-1zM4 12h2v1h-2zM10 12h1v1h-1z"/><path id="g57" d="M1 2h1v1h-1zM8 2h1v1h-1zM1 3h4v1h-4zM8 3h1v1h-1zM0 4h1v1h-1zM3 4h1v1h-1zM8 4h1v1h-1zM0 5h5v1h-5zM6 5h5v1h-5zM0 6h1v1h-1zM2 6h1v1h-1zM4 6h1v1h-1zM6 6h1v1h-1zM8 6h1v1h-1zM10 6h1v1h-1zM0 7h5v1h-5zM6 7h1v1h-1zM8 7h1v1h-1zM10 7h1v1h-1zM0 8h1v1h-1zM2 8h1v1h-1zM4 8h1v1h-1zM6 8h5v1h-5zM0 9h5v1h-5zM8 9h1v1h-1zM0 10h1v1h-1zM2 10h1v1h-1zM4 10h1v1h-1zM8 10h1v1h-1zM10 10h1v1h-1zM0 11h1v1h-1zM2 11h1v1h-1zM4 11h1v1h-1zM8 11h3v1h-3zM0 12h1v1h-1zM3 12h2v1h-2zM6 12h3v1h-3zM10 12h1v1h-1z"/><path id="g58" d="M2 2h1v1h-1zM5 2h1v1h-1zM8 2h1v1h-1zM2 3h1v1h-1zM5 3h1v1h-1zM9 3h1v1h-1zM1 4h1v1h-1zM5 4h1v1h-1zM1 5h10v1h-10zM4 6h1v1h-1zM4 7h5v1h-5zM4 8h1v1h-1zM8 8h1v1h-1zM3 9h1v1h-1zM5 9h1v1h-1zM7 9h1v1h-1zM2 10h1v1h-1zM6 10h1v1h-1zM1 11h1v1h-1zM5 11h1v1h-1zM7 11h2v1h-2zM0 12h1v1h-1zM3 12h2v1h-2zM9 12h2v1h-2z"/><path id="g59" d="M3 2h1v1h-1zM3 3h6v1h-6zM2 4h1v1h-1zM4 4h1v1h-1zM7 4h1v1h-1zM1 5h1v1h-1zM5 5h2v1h-2zM4 6h1v1h-1zM6 6h1v1h-1zM2 7h2v1h-2zM5 7h1v1h-1zM7 7h2v1h-2zM0 8h2v1h-2zM5 8h1v1h-1zM9 8h2v1h-2zM2 9h7v1h-7zM3 10h1v1h-1zM5 10h1v1h-1zM7 10h1v1h-1zM2 11h1v1h-1zM5 11h1v1h-1zM8 11h1v1h-1zM0 12h2v1h-2zM3 12h3v1h-3zM9 12h1v1h-1z"/><path id="g60" d="M3 2h1v1h-1zM7 2h1v1h-1zM3 3h1v1h-1zM5 3h1v1h-1zM7 3h1v1h-1zM2 4h1v1h-1zM5 4h1v1h-1zM7 4h1v1h-1zM2 5h1v1h-1zM4 5h6v1h-6zM1 6h3v1h-3zM7 6h1v1h-1zM0 7h1v1h-1zM2 7h1v1h-1zM7 7h1v1h-1zM2 8h1v1h-1zM4 8h7v1h-7zM2 9h1v1h-1zM7 9h1v1h-1zM2 10h1v1h-1zM7 10h1v1h-1zM2 11h1v1h-1zM7 11h1v1h-1zM2 12h1v1h-1zM7 12h1v1h-1z"/><path id="g61" d="M8 2h1v1h-1zM0 3h4v1h-4zM8 3h1v1h-1zM0 4h1v1h-1zM3 4h8v1h-8zM0 5h1v1h-1zM3 5h1v1h-1zM8 5h1v1h-1zM0 6h1v1h-1zM3 6h1v1h-1zM5 6h1v1h-1zM8 6h1v1h-1zM0 7h4v1h-4zM6 7h1v1h-1zM8 7h1v1h-1zM0 8h1v1h-1zM3 8h1v1h-1zM6 8h1v1h-1zM8 8h1v1h-1zM0 9h1v1h-1zM3 9h1v1h-1zM8 9h1v1h-1zM0 10h1v1h-1zM3 10h1v1h-1zM8 10h1v1h-1zM0 11h4v1h-4zM8 11h1v1h-1zM6 12h3v1h-3z"/><path id="g62" d="M2 2h1v1h-1zM5 2h6v1h-6zM3 3h1v1h-1zM10 3h1v1h-1zM1 4h1v1h-1zM10 4h1v1h-1zM1 5h1v1h-1zM4 5h4v1h-4zM10 5h1v1h-1zM1 6h1v1h-1zM4 6h1v1h-1zM7 6h1v1h-1zM10 6h1v1h-1zM1 7h1v1h-1zM4 7h4v1h-4zM10 7h1v1h-1zM1 8h1v1h-1zM4 8h1v1h-1zM7 8h1v1h-1zM10 8h1v1h-1zM1 9h1v1h-1zM4 9h1v1h-1zM7 9h1v1h-1zM10 9h1v1h-1zM1 10h1v1h-1zM4 10h4v1h-4zM10 10h1v1h-1zM1 11h1v1h-1zM10 11h1v1h-1zM1 12h1v1h-1zM8 12h3v1h-3z"/><path id="g63" d="M1 2h9v1h-9zM3 3h1v1h-1zM7 3h1v1h-1zM3 4h1v1h-1zM7 4h1v1h-1zM3 5h1v1h-1zM7 5h1v1h-1zM3 6h1v1h-1zM7 6h1v1h-1zM0 7h11v1h-11zM3 8h1v1h-1zM7 8h1v1h-1zM2 9h1v1h-1zM7 9h1v1h-1zM2 10h1v1h-1zM7 10h1v1h-1zM1 11h1v1h-1zM7 11h1v1h-1zM0 12h1v1h-1zM7 12h1v1h-1z"/><path id="g64" d="M3 2h2v1h-2zM5 3h1v1h-1zM5 4h1v1h-1zM5 5h1v1h-1zM4 6h1v1h-1zM6 6h1v1h-1zM4 7h1v1h-1zM6 7h1v1h-1zM3 8h1v1h-1zM7 8h1v1h-1zM3 9h1v1h-1zM7 9h1v1h-1zM2 10h1v1h-1zM8 10h1v1h-1zM1 11h1v1h-1zM9 11h1v1h-1zM0 12h1v1h-1zM10 12h1v1h-1z"/><path id="g65" d="M2 2h1v1h-1zM5 2h1v1h-1zM8 2h1v1h-1zM3 3h1v1h-1zM5 3h1v1h-1zM7 3h1v1h-1zM0 4h11v1h-11zM3 5h1v1h-1zM5 5h1v1h-1zM7 5h1v1h-1zM2 6h1v1h-1zM5 6h1v1h-1zM8 6h1v1h-1zM1 7h1v1h-1zM9 7h1v1h-1zM5 8h1v1h-1zM0 9h11v1h-11zM4 10h1v1h-1zM6 10h1v1h-1zM3 11h1v1h-1zM7 11h1v1h-1zM0 12h3v1h-3zM8 12h3v1h-3z"/><path id="g66" d="M1 2h6v1h-6zM9 2h1v1h-1zM2 3h1v1h-1zM4 3h1v1h-1zM7 3h1v1h-1zM9 3h1v1h-1zM2 4h1v1h-1zM4 4h1v1h-1zM7 4h1v1h-1zM9 4h1v1h-1zM0 5h8v1h-8zM9 5h1v1h-1zM2 6h1v1h-1zM4 6h1v1h-1zM7 6h1v1h-1zM9 6h1v1h-1zM2 7h1v1h-1zM4 7h1v1h-1zM9 7h1v1h-1zM1 8h1v1h-1zM4 8h2v1h-2zM8 8h2v1h-2zM5 9h1v1h-1zM2 10h7v1h-7zM5 11h1v1h-1zM0 12h11v1h-11z"/><path id="a67" d="M1 5h4v1h-4zM1 6h1v1h-1zM2 7h2v1h-2zM4 8h1v1h-1zM1 9h4v1h-4z"/><path id="g68" d="M0 2h4v1h-4zM9 2h2v1h-2zM3 3h1v1h-1zM5 3h4v1h-4zM2 4h1v1h-1zM8 4h1v1h-1zM1 5h1v1h-1zM8 5h1v1h-1zM0 6h4v1h-4zM5 6h1v1h-1zM8 6h3v1h-3zM3 7h1v1h-1zM5 7h1v1h-1zM8 7h1v1h-1zM0 8h1v1h-1zM3 8h1v1h-1zM5 8h1v1h-1zM8 8h1v1h-1zM1 9h1v1h-1zM3 9h1v1h-1zM5 9h1v1h-1zM8 9h1v1h-1zM2 10h1v1h-1zM5 10h6v1h-6zM1 11h1v1h-1zM3 11h1v1h-1zM0 12h1v1h-1zM4 12h7v1h-7z"/><path id="g69" d="M2 2h7v1h-7zM2 3h1v1h-1zM8 3h1v1h-1zM2 4h7v1h-7zM2 5h1v1h-1zM8 5h1v1h-1zM0 6h11v1h-11zM2 7h1v1h-1zM5 7h1v1h-1zM8 7h1v1h-1zM2 8h7v1h-7zM2 9h1v1h-1zM5 9h1v1h-1zM8 9h1v1h-1zM1 10h9v1h-9zM5 11h1v1h-1zM0 12h11v1h-11z"/><path id="g70" d="M1 2h1v1h-1zM5 2h1v1h-1zM7 2h1v1h-1zM2 3h1v1h-1zM5 3h1v1h-1zM7 3h1v1h-1zM2 4h1v1h-1zM5 4h5v1h-5zM4 5h1v1h-1zM7 5h1v1h-1zM0 6h3v1h-3zM4 6h7v1h-7zM2 7h1v1h-1zM6 7h1v1h-1zM8 7h1v1h-1zM2 8h1v1h-1zM6 8h1v1h-1zM8 8h1v1h-1zM10 8h1v1h-1zM2 9h1v1h-1zM5 9h1v1h-1zM8 9h1v1h-1zM10 9h1v1h-1zM2 10h1v1h-1zM4 10h1v1h-1zM9 10h2v1h-2zM1 11h1v1h-1zM3 11h1v1h-1zM0 12h1v1h-1zM4 12h7v1h-7z"/><path id="g71" d="M2 2h1v1h-1zM4 2h7v1h-7zM2 3h1v1h-1zM6 3h1v1h-1zM9 3h1v1h-1zM0 4h5v1h-5zM7 4h2v1h-2zM2 5h1v1h-1zM6 5h1v1h-1zM9 5h1v1h-1zM2 6h1v1h-1zM4 6h2v1h-2zM10 6h1v1h-1zM2 7h2v1h-2zM7 7h1v1h-1zM1 8h2v1h-2zM5 8h5v1h-5zM0 9h1v1h-1zM2 9h1v1h-1zM7 9h1v1h-1zM2 10h1v1h-1zM4 10h7v1h-7zM2 11h1v1h-1zM7 11h1v1h-1zM0 12h3v1h-3zM7 12h1v1h-1z"/><path id="g72" d="M3 2h1v1h-1zM7 2h1v1h-1zM3 3h1v1h-1zM7 3h1v1h-1zM2 4h1v1h-1zM8 4h1v1h-1zM2 5h1v1h-1zM8 5h1v1h-1zM1 6h1v1h-1zM9 6h1v1h-1zM0 7h1v1h-1zM2 7h7v1h-7zM10 7h1v1h-1zM4 8h1v1h-1zM8 8h1v1h-1zM4 9h1v1h-1zM8 9h1v1h-1zM3 10h1v1h-1zM8 10h1v1h-1zM2 11h1v1h-1zM8 11h1v1h-1zM0 12h2v1h-2zM6 12h2v1h-2z"/><path id="a73" d="M2 2h2v1h-2zM1 3h1v1h-1zM0 4h1v1h-1zM0 5h4v1h-4zM0 6h1v1h-1zM4 6h1v1h-1zM0 7h1v1h-1zM4 7h1v1h-1zM0 8h1v1h-1zM4 8h1v1h-1zM1 9h3v1h-3z"/><path id="a74" d="M0 2h5v1h-5zM0 3h1v1h-1zM4 3h1v1h-1zM3 4h1v1h-1zM3 5h1v1h-1zM2 6h1v1h-1zM2 7h1v1h-1zM2 8h1v1h-1zM2 9h1v1h-1z"/><path id="a75" d="M1 2h3v1h-3zM0 3h1v1h-1zM4 3h1v1h-1zM0 4h1v1h-1zM4 4h1v1h-1zM1 5h3v1h-3zM0 6h1v1h-1zM4 6h1v1h-1zM0 7h1v1h-1zM4 7h1v1h-1zM0 8h1v1h-1zM4 8h1v1h-1zM1 9h3v1h-3z"/><path id="g76" d="M7 2h1v1h-1zM1 3h4v1h-4zM7 3h1v1h-1zM7 4h1v1h-1zM6 5h5v1h-5zM0 6h6v1h-6zM7 6h1v1h-1zM10 6h1v1h-1zM2 7h1v1h-1zM7 7h1v1h-1zM10 7h1v1h-1zM2 8h1v1h-1zM7 8h1v1h-1zM10 8h1v1h-1zM1 9h1v1h-1zM4 9h1v1h-1zM7 9h1v1h-1zM10 9h1v1h-1zM0 10h5v1h-5zM6 10h1v1h-1zM10 10h1v1h-1zM4 11h1v1h-1zM6 11h1v1h-1zM10 11h1v1h-1zM5 12h1v1h-1zM8 12h2v1h-2z"/><path id="g77" d="M3 2h1v1h-1zM5 2h1v1h-1zM3 3h1v1h-1zM5 3h1v1h-1zM2 4h1v1h-1zM5 4h6v1h-6zM2 5h1v1h-1zM4 5h1v1h-1zM6 5h1v1h-1zM1 6h3v1h-3zM6 6h1v1h-1zM0 7h1v1h-1zM2 7h1v1h-1zM6 7h4v1h-4zM2 8h1v1h-1zM6 8h1v1h-1zM2 9h1v1h-1zM6 9h1v1h-1zM2 10h1v1h-1zM6 10h5v1h-5zM2 11h1v1h-1zM6 11h1v1h-1zM2 12h1v1h-1zM6 12h1v1h-1z"/><path id="a78" d="M4 1h1v1h-1zM3 2h1v1h-1zM2 3h1v1h-1zM2 4h1v1h-1zM2 5h1v1h-1zM2 6h1v1h-1zM2 7h1v1h-1zM2 8h1v1h-1zM3 9h1v1h-1zM4 10h1v1h-1z"/><path id="a79" d="M0 5h4v1h-4zM0 6h1v1h-1zM2 6h1v1h-1zM4 6h1v1h-1zM0 7h1v1h-1zM2 7h1v1h-1zM4 7h1v1h-1zM0 8h1v1h-1zM2 8h1v1h-1zM4 8h1v1h-1zM0 9h1v1h-1zM2 9h1v1h-1zM4 9h1v1h-1z"/><path id="a80" d="M0 1h1v1h-1zM1 2h1v1h-1zM2 3h1v1h-1zM2 4h1v1h-1zM2 5h1v1h-1zM2 6h1v1h-1zM2 7h1v1h-1zM2 8h1v1h-1zM1 9h1v1h-1zM0 10h1v1h-1z"/><path id="g81" d="M1 2h1v1h-1zM9 2h2v1h-2zM2 3h1v1h-1zM5 3h4v1h-4zM2 4h1v1h-1zM5 4h1v1h-1zM5 5h6v1h-6zM0 6h3v1h-3zM5 6h2v1h-2zM10 6h1v1h-1zM2 7h1v1h-1zM5 7h1v1h-1zM7 7h1v1h-1zM9 7h1v1h-1zM2 8h1v1h-1zM5 8h1v1h-1zM8 8h1v1h-1zM2 9h1v1h-1zM4 9h1v1h-1zM7 9h1v1h-1zM9 9h1v1h-1zM2 10h1v1h-1zM5 10h2v1h-2zM10 10h1v1h-1zM1 11h1v1h-1zM3 11h1v1h-1zM0 12h1v1h-1zM4 12h7v1h-7z"/><path id="g82" d="M1 2h10v1h-10zM1 3h1v1h-1zM10 3h1v1h-1zM1 4h1v1h-1zM10 4h1v1h-1zM1 5h1v1h-1zM4 5h4v1h-4zM10 5h1v1h-1zM1 6h1v1h-1zM4 6h1v1h-1zM7 6h1v1h-1zM10 6h1v1h-1zM1 7h1v1h-1zM4 7h1v1h-1zM7 7h1v1h-1zM10 7h1v1h-1zM1 8h1v1h-1zM4 8h4v1h-4zM10 8h1v1h-1zM1 9h1v1h-1zM4 9h1v1h-1zM7 9h1v1h-1zM10 9h1v1h-1zM1 10h1v1h-1zM10 10h1v1h-1zM1 11h10v1h-10zM1 12h1v1h-1zM10 12h1v1h-1z"/><path id="a83" d="M0 2h4v1h-4zM1 3h1v1h-1zM4 3h1v1h-1zM1 4h1v1h-1zM4 4h1v1h-1zM1 5h3v1h-3zM1 6h1v1h-1zM3 6h1v1h-1zM1 7h1v1h-1zM4 7h1v1h-1zM1 8h1v1h-1zM4 8h1v1h-1zM0 9h2v1h-2zM4 9h2v1h-2z"/><path id="a84" d="M0 5h2v1h-2zM3 5h2v1h-2zM1 6h2v1h-2zM1 7h1v1h-1zM1 8h1v1h-1zM0 9h3v1h-3z"/><path id="a85" d="M0 2h5v1h-5zM1 3h1v1h-1zM4 3h1v1h-1zM1 4h1v1h-1zM1 5h3v1h-3zM1 6h1v1h-1zM1 7h1v1h-1zM1 8h1v1h-1zM4 8h1v1h-1zM0 9h5v1h-5z"/><path id="a86" d="M2 5h2v1h-2zM1 6h1v1h-1zM4 6h1v1h-1zM1 7h4v1h-4zM1 8h1v1h-1zM2 9h3v1h-3z"/><path id="g87" d="M2 2h1v1h-1zM6 2h1v1h-1zM2 3h9v1h-9zM2 4h1v1h-1zM1 5h1v1h-1zM4 5h6v1h-6zM1 6h1v1h-1zM4 6h1v1h-1zM9 6h1v1h-1zM0 7h2v1h-2zM3 7h8v1h-8zM1 8h1v1h-1zM3 8h1v1h-1zM10 8h1v1h-1zM1 9h1v1h-1zM4 9h6v1h-6zM1 10h1v1h-1zM7 10h1v1h-1zM1 11h1v1h-1zM7 11h1v1h-1zM1 12h1v1h-1zM5 12h3v1h-3z"/><path id="g88" d="M6 2h1v1h-1zM6 3h1v1h-1zM6 4h1v1h-1zM3 5h1v1h-1zM6 5h1v1h-1zM3 6h1v1h-1zM6 6h4v1h-4zM3 7h1v1h-1zM6 7h1v1h-1zM3 8h1v1h-1zM6 8h1v1h-1zM3 9h1v1h-1zM6 9h1v1h-1zM3 10h1v1h-1zM6 10h1v1h-1zM3 11h1v1h-1zM6 11h1v1h-1zM1 12h10v1h-10z"/><path id="g89" d="M6 2h1v1h-1zM8 2h1v1h-1zM6 3h1v1h-1zM9 3h1v1h-1zM0 4h11v1h-11zM6 5h1v1h-1zM1 6h4v1h-4zM6 6h1v1h-1zM9 6h1v1h-1zM1 7h1v1h-1zM4 7h1v1h-1zM6 7h1v1h-1zM9 7h1v1h-1zM1 8h4v1h-4zM7 8h1v1h-1zM9 8h1v1h-1zM7 9h2v1h-2zM3 10h3v1h-3zM8 10h1v1h-1zM10 10h1v1h-1zM0 11h3v1h-3zM7 11h1v1h-1zM9 11h2v1h-2zM5 12h2v1h-2zM10 12h1v1h-1z"/><path id="g90" d="M3 2h1v1h-1zM6 2h5v1h-5zM1 3h5v1h-5zM7 3h1v1h-1zM10 3h1v1h-1zM3 4h1v1h-1zM5 4h1v1h-1zM7 4h1v1h-1zM9 4h1v1h-1zM0 5h9v1h-9zM2 6h1v1h-1zM7 6h1v1h-1zM9 6h1v1h-1zM2 7h4v1h-4zM7 7h1v1h-1zM10 7h1v1h-1zM1 8h2v1h-2zM5 8h1v1h-1zM7 8h1v1h-1zM10 8h1v1h-1zM0 9h1v1h-1zM2 9h4v1h-4zM7 9h1v1h-1zM10 9h1v1h-1zM2 10h1v1h-1zM5 10h1v1h-1zM7 10h2v1h-2zM10 10h1v1h-1zM2 11h4v1h-4zM7 11h1v1h-1zM9 11h1v1h-1zM2 12h1v1h-1zM5 12h1v1h-1zM7 12h1v1h-1z"/><path id="g91" d="M3 2h8v1h-8zM2 3h1v1h-1zM4 3h1v1h-1zM8 3h1v1h-1zM1 4h1v1h-1zM4 4h7v1h-7zM0 5h1v1h-1zM3 5h2v1h-2zM8 5h1v1h-1zM2 6h1v1h-1zM4 6h1v1h-1zM6 6h5v1h-5zM1 7h2v1h-2zM4 7h1v1h-1zM6 7h1v1h-1zM10 7h1v1h-1zM0 8h1v1h-1zM2 8h1v1h-1zM4 8h1v1h-1zM6 8h5v1h-5zM2 9h1v1h-1zM4 9h1v1h-1zM6 9h1v1h-1zM10 9h1v1h-1zM2 10h1v1h-1zM4 10h1v1h-1zM6 10h5v1h-5zM2 11h1v1h-1zM4 11h1v1h-1zM6 11h1v1h-1zM10 11h1v1h-1zM2 12h2v1h-2zM6 12h5v1h-5z"/><path id="g92" d="M5 2h6v1h-6zM0 3h5v1h-5zM7 3h1v1h-1zM2 4h1v1h-1zM7 4h1v1h-1zM2 5h1v1h-1zM6 5h2v1h-2zM1 6h3v1h-3zM6 6h3v1h-3zM2 7h1v1h-1zM5 7h1v1h-1zM7 7h1v1h-1zM9 7h1v1h-1zM2 8h1v1h-1zM5 8h1v1h-1zM7 8h1v1h-1zM10 8h1v1h-1zM2 9h3v1h-3zM7 9h1v1h-1zM10 9h1v1h-1zM0 10h2v1h-2zM7 10h1v1h-1zM7 11h1v1h-1zM7 12h1v1h-1z"/><path id="g93" d="M1 2h1v1h-1zM6 2h1v1h-1zM2 3h1v1h-1zM6 3h1v1h-1zM2 4h1v1h-1zM5 4h6v1h-6zM5 5h1v1h-1zM9 5h1v1h-1zM2 6h1v1h-1zM4 6h1v1h-1zM7 6h1v1h-1zM2 7h1v1h-1zM7 7h1v1h-1zM0 8h2v1h-2zM7 8h1v1h-1zM1 9h1v1h-1zM6 9h1v1h-1zM8 9h1v1h-1zM1 10h1v1h-1zM6 10h1v1h-1zM8 10h1v1h-1zM1 11h1v1h-1zM5 11h1v1h-1zM9 11h1v1h-1zM3 12h2v1h-2zM10 12h1v1h-1z"/><path id="a94" d="M1 1h2v1h-2zM5 1h1v1h-1zM0 2h1v1h-1zM3 2h2v1h-2z"/><path id="g95" d="M5 2h1v1h-1zM5 3h1v1h-1zM2 4h7v1h-7zM5 5h1v1h-1zM5 6h1v1h-1zM0 7h11v1h-11zM5 8h1v1h-1zM4 9h1v1h-1zM7 9h1v1h-1zM3 10h1v1h-1zM8 10h1v1h-1zM1 11h9v1h-9zM2 12h1v1h-1zM9 12h1v1h-1z"/><path id="g96" d="M2 2h1v1h-1zM9 2h1v1h-1zM2 3h1v1h-1zM6 3h1v1h-1zM9 3h1v1h-1zM0 4h5v1h-5zM7 4h1v1h-1zM9 4h1v1h-1zM2 5h1v1h-1zM9 5h1v1h-1zM2 6h1v1h-1zM4 6h1v1h-1zM6 6h1v1h-1zM9 6h1v1h-1zM2 7h2v1h-2zM7 7h1v1h-1zM9 7h1v1h-1zM1 8h2v1h-2zM8 8h3v1h-3zM0 9h1v1h-1zM2 9h1v1h-1zM4 9h4v1h-4zM9 9h1v1h-1zM2 10h1v1h-1zM9 10h1v1h-1zM2 11h1v1h-1zM9 11h1v1h-1zM0 12h3v1h-3zM9 12h1v1h-1z"/><path id="g97" d="M5 2h1v1h-1zM0 3h11v1h-11zM5 4h1v1h-1zM2 5h7v1h-7zM2 6h1v1h-1zM8 6h1v1h-1zM2 7h7v1h-7zM2 8h1v1h-1zM8 8h1v1h-1zM2 9h7v1h-7zM2 10h1v1h-1zM8 10h1v1h-1zM2 11h1v1h-1zM8 11h1v1h-1zM0 12h11v1h-11z"/><path id="g98" d="M0 2h1v1h-1zM6 2h1v1h-1zM1 3h1v1h-1zM3 3h8v1h-8zM5 4h1v1h-1zM0 5h1v1h-1zM4 5h1v1h-1zM8 5h1v1h-1zM1 6h1v1h-1zM3 6h7v1h-7zM2 7h1v1h-1zM9 7h1v1h-1zM2 8h1v1h-1zM4 8h1v1h-1zM6 8h1v1h-1zM8 8h1v1h-1zM0 9h2v1h-2zM4 9h1v1h-1zM6 9h1v1h-1zM8 9h1v1h-1zM1 10h1v1h-1zM4 10h1v1h-1zM6 10h1v1h-1zM8 10h1v1h-1zM10 10h1v1h-1zM1 11h1v1h-1zM4 11h1v1h-1zM6 11h1v1h-1zM8 11h1v1h-1zM10 11h1v1h-1zM1 12h1v1h-1zM3 12h1v1h-1zM6 12h1v1h-1zM9 12h2v1h-2z"/><path id="g99" d="M2 2h7v1h-7zM4 3h1v1h-1zM6 3h1v1h-1zM3 4h1v1h-1zM5 4h1v1h-1zM7 4h1v1h-1zM0 5h11v1h-11zM1 6h1v1h-1zM3 6h1v1h-1zM6 6h1v1h-1zM8 6h1v1h-1zM0 7h1v1h-1zM2 7h1v1h-1zM4 7h2v1h-2zM7 7h1v1h-1zM9 7h1v1h-1zM0 8h11v1h-11zM0 9h1v1h-1zM2 9h1v1h-1zM8 9h1v1h-1zM10 9h1v1h-1zM2 10h7v1h-7zM2 11h1v1h-1zM8 11h1v1h-1zM0 12h11v1h-11z"/><path id="g100" d="M2 2h1v1h-1zM2 3h1v1h-1zM0 4h6v1h-6zM7 4h4v1h-4zM2 5h1v1h-1zM5 5h1v1h-1zM7 5h1v1h-1zM10 5h1v1h-1zM2 6h1v1h-1zM5 6h1v1h-1zM7 6h1v1h-1zM10 6h1v1h-1zM2 7h1v1h-1zM5 7h1v1h-1zM7 7h1v1h-1zM10 7h1v1h-1zM2 8h1v1h-1zM5 8h1v1h-1zM7 8h1v1h-1zM10 8h1v1h-1zM2 9h1v1h-1zM5 9h1v1h-1zM7 9h1v1h-1zM10 9h1v1h-1zM1 10h1v1h-1zM5 10h1v1h-1zM7 10h1v1h-1zM10 10h1v1h-1zM1 11h1v1h-1zM3 11h1v1h-1zM5 11h1v1h-1zM7 11h4v1h-4zM0 12h1v1h-1zM4 12h1v1h-1zM7 12h1v1h-1zM10 12h1v1h-1z"/><path id="g101" d="M5 2h1v1h-1zM1 3h10v1h-10zM4 4h1v1h-1zM7 4h1v1h-1zM2 5h1v1h-1zM4 5h1v1h-1zM7 5h1v1h-1zM9 5h1v1h-1zM1 6h1v1h-1zM4 6h1v1h-1zM7 6h1v1h-1zM10 6h1v1h-1zM2 8h8v1h-8zM4 9h1v1h-1zM7 9h1v1h-1zM5 10h2v1h-2zM4 11h1v1h-1zM7 11h1v1h-1zM1 12h3v1h-3zM8 12h3v1h-3z"/><path id="a102" d="M2 2h2v1h-2zM3 3h1v1h-1zM3 4h1v1h-1zM1 5h3v1h-3zM0 6h1v1h-1zM3 6h1v1h-1zM0 7h1v1h-1zM3 7h1v1h-1zM0 8h1v1h-1zM3 8h1v1h-1zM1 9h4v1h-4z"/><path id="a103" d="M2 2h3v1h-3zM1 3h1v1h-1zM1 4h1v1h-1zM0 5h4v1h-4zM1 6h1v1h-1zM1 7h1v1h-1zM1 8h1v1h-1zM0 9h4v1h-4z"/><path id="a104" d="M4 1h1v1h-1zM3 2h1v1h-1zM3 3h1v1h-1zM3 4h1v1h-1zM2 5h1v1h-1zM2 6h1v1h-1zM1 7h1v1h-1zM1 8h1v1h-1zM0 9h1v1h-1zM0 10h1v1h-1z"/><path id="a105" d="M1 3h1v1h-1zM1 4h1v1h-1zM0 5h3v1h-3zM1 6h1v1h-1zM1 7h1v1h-1zM1 8h1v1h-1zM2 9h2v1h-2z"/><path id="a106" d="M0 2h2v1h-2zM4 2h2v1h-2zM1 3h1v1h-1zM4 3h1v1h-1zM1 4h1v1h-1zM4 4h1v1h-1zM1 5h4v1h-4zM1 6h1v1h-1zM4 6h1v1h-1zM1 7h1v1h-1zM4 7h1v1h-1zM1 8h1v1h-1zM4 8h1v1h-1zM0 9h2v1h-2zM4 9h2v1h-2z"/><path id="a107" d="M1 5h5v1h-5zM4 6h1v1h-1zM3 7h1v1h-1zM2 8h1v1h-1zM1 9h5v1h-5z"/><path id="g108" d="M2 2h1v1h-1zM6 2h1v1h-1zM2 3h1v1h-1zM6 3h4v1h-4zM1 4h1v1h-1zM3 4h1v1h-1zM5 4h1v1h-1zM9 4h1v1h-1zM0 5h3v1h-3zM4 5h1v1h-1zM6 5h1v1h-1zM8 5h1v1h-1zM2 6h1v1h-1zM7 6h1v1h-1zM1 7h1v1h-1zM6 7h1v1h-1zM8 7h1v1h-1zM0 8h3v1h-3zM4 8h2v1h-2zM9 8h2v1h-2zM7 9h1v1h-1zM2 10h2v1h-2zM8 10h2v1h-2zM0 11h2v1h-2zM6 11h2v1h-2zM8 12h2v1h-2z"/><path id="g109" d="M5 2h1v1h-1zM5 3h1v1h-1zM1 4h9v1h-9zM1 5h1v1h-1zM5 5h1v1h-1zM9 5h1v1h-1zM1 6h9v1h-9zM1 7h1v1h-1zM5 7h1v1h-1zM9 7h1v1h-1zM1 8h1v1h-1zM5 8h1v1h-1zM9 8h1v1h-1zM1 9h9v1h-9zM5 10h1v1h-1zM10 10h1v1h-1zM5 11h1v1h-1zM10 11h1v1h-1zM6 12h5v1h-5z"/><path id="a110" d="M0 5h2v1h-2zM3 5h2v1h-2zM0 6h1v1h-1zM4 6h1v1h-1zM1 7h1v1h-1zM3 7h1v1h-1zM1 8h1v1h-1zM3 8h1v1h-1zM2 9h1v1h-1z"/><path id="a111" d="M0 2h2v1h-2zM3 2h2v1h-2zM0 3h1v1h-1zM4 3h1v1h-1zM0 4h1v1h-1zM4 4h1v1h-1zM1 5h1v1h-1zM3 5h1v1h-1zM1 6h1v1h-1zM3 6h1v1h-1zM1 7h1v1h-1zM3 7h1v1h-1zM2 8h1v1h-1zM2 9h1v1h-1z"/><g id="g112"><path d="M2 3h1v1h-1zM9 3h1v1h-1zM9 4h1v1h-1zM0 5h1v1h-1zM7 5h1v1h-1zM11 6h1v1h-1zM4 7h1v1h-1zM7 7h1v1h-1zM4 8h1v1h-1zM9 8h1v1h-1zM1 10h2v1h-2zM4 10h1v1h-1zM2 11h1v1h-1zM4 11h1v1h-1zM8 11h1v1h-1zM8 12h1v1h-1zM0 13h2v1h-2zM5 13h1v1h-1zM8 13h1v1h-1zM10 13h1v1h-1zM6 14h1v1h-1zM11 14h1v1h-1z" fill-opacity="0.25"/><path d="M3 3h1v1h-1zM10 4h1v1h-1zM10 5h1v1h-1zM1 6h1v1h-1zM5 6h2v1h-2zM5 7h1v1h-1zM8 7h1v1h-1zM5 8h1v1h-1zM7 8h1v1h-1zM1 9h1v1h-1zM5 9h1v1h-1zM9 9h1v1h-1zM8 10h2v1h-2zM1 11h1v1h-1zM5 11h1v1h-1zM9 11h1v1h-1zM5 12h3v1h-3zM9 12h1v1h-1zM11 12h1v1h-1zM9 13h1v1h-1zM11 13h1v1h-1zM3 14h1v1h-1zM5 14h1v1h-1z" fill-opacity="0.5"/><path d="M8 3h1v1h-1zM8 4h1v1h-1zM1 5h5v1h-5zM8 5h1v1h-1zM2 6h3v1h-3zM9 6h2v1h-2zM1 7h1v1h-1zM1 8h1v1h-1zM8 8h1v1h-1zM2 9h1v1h-1zM4 9h1v1h-1zM7 9h2v1h-2zM3 10h1v1h-1zM7 10h1v1h-1zM3 11h1v1h-1zM7 11h1v1h-1zM1 12h1v1h-1zM3 12h1v1h-1zM3 13h1v1h-1zM2 14h1v1h-1zM9 14h2v1h-2z" fill-opacity="0.75"/><path d="M3 4h1v1h-1zM7 6h2v1h-2zM3 9h1v1h-1zM6 13h1v1h-1z"/></g><g id="g113"><path d="M3 3h1v1h-1zM1 5h1v1h-1zM8 6h1v1h-1zM0 7h1v1h-1zM1 8h1v1h-1zM3 8h1v1h-1zM6 8h1v1h-1zM8 8h1v1h-1zM1 9h1v1h-1zM0 10h1v1h-1zM1 11h1v1h-1zM1 12h1v1h-1zM0 13h1v1h-1zM2 13h1v1h-1z" fill-opacity="0.25"/><path d="M2 3h1v1h-1zM2 5h1v1h-1zM10 5h1v1h-1zM3 6h2v1h-2zM4 7h1v1h-1zM11 7h1v1h-1zM2 9h1v1h-1zM5 9h1v1h-1zM10 9h1v1h-1zM4 10h2v1h-2zM2 12h1v1h-1zM4 12h1v1h-1zM1 13h1v1h-1zM6 14h1v1h-1zM10 14h1v1h-1z" fill-opacity="0.5"/><path d="M7 3h1v1h-1zM2 4h1v1h-1zM10 4h1v1h-1zM5 5h2v1h-2zM8 5h2v1h-2zM1 6h1v1h-1zM9 6h1v1h-1zM2 7h2v1h-2zM5 7h2v1h-2zM10 7h1v1h-1zM2 8h1v1h-1zM7 8h1v1h-1zM8 9h2v1h-2zM3 10h1v1h-1zM6 10h1v1h-1zM10 10h1v1h-1zM7 11h4v1h-4zM3 12h1v1h-1zM6 12h1v1h-1zM10 12h1v1h-1zM7 13h4v1h-4z" fill-opacity="0.75"/><path d="M7 4h1v1h-1zM7 5h1v1h-1zM7 6h1v1h-1zM1 7h1v1h-1zM7 7h3v1h-3zM6 9h2v1h-2zM1 10h2v1h-2zM6 11h1v1h-1zM6 13h1v1h-1z"/></g><g id="g114"><path d="M2 4h1v1h-1zM3 5h1v1h-1zM3 7h1v1h-1zM8 8h1v1h-1zM10 10h1v1h-1zM4 12h3v1h-3zM10 13h1v1h-1zM0 14h1v1h-1zM11 14h1v1h-1z" fill-opacity="0.25"/><path d="M4 4h1v1h-1zM10 4h1v1h-1zM11 7h1v1h-1zM0 8h1v1h-1zM5 9h2v1h-2zM8 9h2v1h-2zM10 12h1v1h-1zM4 13h1v1h-1zM1 14h1v1h-1zM4 14h1v1h-1z" fill-opacity="0.5"/><path d="M1 4h1v1h-1zM2 5h1v1h-1zM9 10h1v1h-1zM4 11h1v1h-1zM6 11h2v1h-2zM10 11h1v1h-1zM1 13h3v1h-3zM5 14h1v1h-1zM10 14h1v1h-1z" fill-opacity="0.75"/><path d="M5 4h5v1h-5zM4 7h7v1h-7zM1 8h2v1h-2zM6 8h1v1h-1zM2 9h1v1h-1zM2 10h1v1h-1zM5 10h1v1h-1zM2 11h1v1h-1zM5 11h1v1h-1zM8 11h2v1h-2zM2 12h1v1h-1zM6 14h4v1h-4z"/></g><g id="g115"><path d="M2 3h1v1h-1zM3 4h1v1h-1zM0 5h1v1h-1zM2 5h1v1h-1zM4 6h1v1h-1zM4 7h1v1h-1zM3 8h1v1h-1zM8 8h1v1h-1zM3 9h1v1h-1zM8 9h1v1h-1zM3 10h1v1h-1zM8 10h1v1h-1zM3 11h1v1h-1zM8 11h1v1h-1zM3 12h1v1h-1zM8 12h1v1h-1zM3 13h1v1h-1zM8 13h1v1h-1zM3 14h1v1h-1zM6 14h1v1h-1zM9 14h1v1h-1z" fill-opacity="0.25"/><path d="M3 7h1v1h-1zM11 7h1v1h-1zM0 9h1v1h-1z" fill-opacity="0.5"/><path d="M3 3h1v1h-1zM5 4h1v1h-1zM1 5h1v1h-1zM3 6h1v1h-1zM2 7h1v1h-1zM1 8h1v1h-1zM9 8h1v1h-1zM1 9h2v1h-2zM9 9h1v1h-1zM2 10h1v1h-1zM9 10h1v1h-1zM2 11h1v1h-1zM9 11h1v1h-1zM2 12h1v1h-1zM9 12h1v1h-1zM2 13h1v1h-1zM9 13h1v1h-1zM2 14h1v1h-1zM8 14h1v1h-1z" fill-opacity="0.75"/><path d="M2 4h1v1h-1zM6 4h5v1h-5zM5 7h6v1h-6zM2 8h1v1h-1zM7 14h1v1h-1z"/></g><g id="g116"><path d="M7 11h1v1h-1z" fill-opacity="0.25"/><path d="M4 4h1v1h-1zM11 6h1v1h-1zM6 9h2v1h-2zM4 12h1v1h-1z" fill-opacity="0.5"/><path d="M9 3h1v1h-1zM1 4h3v1h-3zM1 5h1v1h-1zM4 5h1v1h-1zM1 6h1v1h-1zM4 6h2v1h-2zM1 7h1v1h-1zM4 7h1v1h-1zM2 8h3v1h-3zM6 8h1v1h-1zM1 9h1v1h-1zM4 9h1v1h-1zM1 10h1v1h-1zM4 10h1v1h-1zM1 11h1v1h-1zM4 11h1v1h-1zM2 12h2v1h-2zM1 13h1v1h-1zM9 14h1v1h-1z" fill-opacity="0.75"/><path d="M9 4h1v1h-1zM9 5h1v1h-1zM6 6h5v1h-5zM9 7h1v1h-1zM1 8h1v1h-1zM9 8h1v1h-1zM9 9h1v1h-1zM7 10h1v1h-1zM9 10h1v1h-1zM9 11h1v1h-1zM1 12h1v1h-1zM9 12h1v1h-1zM9 13h1v1h-1zM7 14h2v1h-2z"/></g><g id="g117"><path d="M1 3h2v1h-2zM1 4h1v1h-1zM3 5h1v1h-1zM3 7h1v1h-1zM8 7h1v1h-1zM3 8h1v1h-1zM8 8h1v1h-1zM3 9h1v1h-1zM8 9h1v1h-1zM3 10h1v1h-1zM8 10h1v1h-1zM3 11h1v1h-1zM8 11h1v1h-1zM3 12h1v1h-1zM8 12h1v1h-1zM8 14h1v1h-1z" fill-opacity="0.25"/><path d="M2 5h1v1h-1zM4 8h1v1h-1zM7 8h1v1h-1zM4 10h1v1h-1zM7 10h1v1h-1zM4 11h1v1h-1zM7 11h1v1h-1zM10 14h1v1h-1z" fill-opacity="0.5"/><path d="M2 4h1v1h-1zM4 4h1v1h-1zM1 6h1v1h-1zM5 7h2v1h-2zM5 9h2v1h-2zM4 12h4v1h-4zM1 14h1v1h-1zM9 14h1v1h-1z" fill-opacity="0.75"/><path d="M5 4h6v1h-6zM10 5h1v1h-1zM10 6h1v1h-1zM1 7h1v1h-1zM4 7h1v1h-1zM7 7h1v1h-1zM10 7h1v1h-1zM1 8h1v1h-1zM10 8h1v1h-1zM1 9h1v1h-1zM4 9h1v1h-1zM7 9h1v1h-1zM10 9h1v1h-1zM1 10h1v1h-1zM10 10h1v1h-1zM1 11h1v1h-1zM10 11h1v1h-1zM1 12h1v1h-1zM10 12h1v1h-1zM1 13h1v1h-1zM10 13h1v1h-1z"/></g><g id="g118"><path d="M7 5h1v1h-1zM7 6h1v1h-1zM7 7h1v1h-1zM0 8h1v1h-1zM11 8h1v1h-1zM4 9h1v1h-1zM7 9h1v1h-1zM4 10h1v1h-1zM7 10h1v1h-1zM2 11h1v1h-1zM7 11h1v1h-1zM7 12h1v1h-1zM7 13h1v1h-1zM7 14h1v1h-1z" fill-opacity="0.25"/><path d="M3 5h2v1h-2zM3 6h2v1h-2zM3 7h2v1h-2zM3 12h1v1h-1zM1 13h1v1h-1z" fill-opacity="0.5"/><path d="M1 4h1v1h-1zM8 5h1v1h-1zM8 6h1v1h-1zM8 7h1v1h-1zM3 9h1v1h-1zM8 9h1v1h-1zM3 10h1v1h-1zM8 10h1v1h-1zM8 11h1v1h-1zM2 12h1v1h-1zM8 12h1v1h-1zM2 13h1v1h-1zM8 13h1v1h-1zM1 14h1v1h-1zM8 14h1v1h-1z" fill-opacity="0.75"/><path d="M2 4h9v1h-9zM1 8h10v1h-10zM3 11h1v1h-1z"/></g><g id="g119"><path d="M9 3h1v1h-1zM4 4h1v1h-1zM3 5h1v1h-1zM0 9h1v1h-1zM11 9h1v1h-1zM6 11h1v1h-1zM5 12h1v1h-1zM1 13h1v1h-1zM4 13h1v1h-1zM0 14h1v1h-1zM2 14h1v1h-1zM9 14h1v1h-1zM11 14h1v1h-1z" fill-opacity="0.25"/><path d="M3 3h1v1h-1zM8 3h1v1h-1zM4 5h1v1h-1zM7 5h2v1h-2zM1 6h1v1h-1zM10 6h1v1h-1zM5 7h2v1h-2zM5 8h2v1h-2zM4 11h1v1h-1zM3 12h1v1h-1zM7 12h1v1h-1zM8 13h1v1h-1zM10 13h1v1h-1z" fill-opacity="0.5"/><path d="M3 4h1v1h-1zM5 11h1v1h-1zM7 11h1v1h-1zM8 12h1v1h-1zM2 13h2v1h-2zM1 14h1v1h-1zM10 14h1v1h-1z" fill-opacity="0.75"/><path d="M8 4h1v1h-1zM2 6h8v1h-8zM1 9h10v1h-10zM5 10h2v1h-2zM4 12h1v1h-1zM9 13h1v1h-1z"/></g><g id="g120"><path d="M3 4h6v1h-6zM3 5h6v1h-6zM0 7h1v1h-1zM11 7h1v1h-1zM3 9h2v1h-2zM7 9h2v1h-2zM10 9h1v1h-1zM3 10h2v1h-2zM7 10h2v1h-2zM10 10h1v1h-1zM1 12h1v1h-1zM10 12h1v1h-1zM0 14h1v1h-1zM11 14h1v1h-1z" fill-opacity="0.25"/><path d="M2 3h8v1h-8zM2 6h8v1h-8zM2 8h8v1h-8zM5 9h2v1h-2zM2 11h3v1h-3zM7 11h3v1h-3zM2 12h3v1h-3zM7 12h3v1h-3zM5 13h2v1h-2z" fill-opacity="0.5"/><path d="M1 7h10v1h-10zM2 9h1v1h-1zM9 9h1v1h-1zM5 10h2v1h-2zM9 10h1v1h-1zM5 11h2v1h-2zM5 12h2v1h-2zM1 14h10v1h-10z" fill-opacity="0.75"/><path d="M2 4h1v1h-1zM9 4h1v1h-1zM2 5h1v1h-1zM9 5h1v1h-1zM2 10h1v1h-1z"/></g><g id="g121"><path d="M2 3h1v1h-1zM3 4h1v1h-1zM11 4h1v1h-1zM1 5h1v1h-1zM4 5h1v1h-1zM7 5h1v1h-1zM7 6h1v1h-1zM7 7h1v1h-1zM3 8h1v1h-1zM7 8h1v1h-1zM4 9h1v1h-1zM7 9h1v1h-1zM0 10h1v1h-1zM7 10h1v1h-1zM1 11h1v1h-1zM7 11h1v1h-1zM2 12h1v1h-1zM7 12h1v1h-1zM4 13h1v1h-1z" fill-opacity="0.25"/><path d="M3 3h1v1h-1zM3 6h1v1h-1zM0 7h1v1h-1zM1 9h2v1h-2zM4 10h1v1h-1zM3 12h2v1h-2zM0 13h1v1h-1zM3 13h1v1h-1zM11 13h1v1h-1z" fill-opacity="0.5"/><path d="M2 4h1v1h-1zM5 4h1v1h-1zM2 5h1v1h-1zM8 5h1v1h-1zM1 6h1v1h-1zM4 6h1v1h-1zM8 6h1v1h-1zM8 7h1v1h-1zM2 8h1v1h-1zM8 8h1v1h-1zM8 9h1v1h-1zM3 10h1v1h-1zM8 10h1v1h-1zM8 11h1v1h-1zM8 12h1v1h-1zM2 13h1v1h-1z" fill-opacity="0.75"/><path d="M6 4h5v1h-5zM1 7h3v1h-3zM1 10h2v1h-2zM1 13h1v1h-1zM5 13h6v1h-6z"/></g><g id="g122"><path d="M7 4h1v1h-1zM7 5h1v1h-1zM11 6h1v1h-1zM0 7h1v1h-1zM7 7h1v1h-1zM11 7h1v1h-1zM11 8h1v1h-1zM8 9h1v1h-1zM11 9h1v1h-1zM1 10h1v1h-1zM8 10h1v1h-1zM11 10h1v1h-1zM2 11h2v1h-2zM6 12h1v1h-1zM1 13h1v1h-1zM7 13h1v1h-1zM5 14h1v1h-1zM10 14h1v1h-1z" fill-opacity="0.25"/><path d="M8 3h1v1h-1zM5 4h1v1h-1zM8 7h1v1h-1zM10 7h1v1h-1zM7 8h2v1h-2zM4 9h1v1h-1zM7 9h1v1h-1zM2 10h1v1h-1zM4 10h2v1h-2zM4 11h1v1h-1zM4 12h1v1h-1zM6 14h1v1h-1z" fill-opacity="0.5"/><path d="M1 4h4v1h-4zM8 4h1v1h-1zM8 5h1v1h-1zM6 6h1v1h-1zM1 7h5v1h-5zM2 8h1v1h-1zM10 8h1v1h-1zM2 9h1v1h-1zM10 9h1v1h-1zM7 10h1v1h-1zM10 10h1v1h-1zM1 11h1v1h-1zM5 11h1v1h-1zM10 11h1v1h-1zM3 12h1v1h-1zM5 12h1v1h-1zM7 12h1v1h-1zM8 14h2v1h-2z" fill-opacity="0.75"/><path d="M7 6h4v1h-4zM7 11h1v1h-1zM1 12h2v1h-2zM10 12h1v1h-1zM6 13h1v1h-1zM10 13h1v1h-1z"/></g><g id="g123"><path d="M2 4h1v1h-1zM5 4h1v1h-1zM3 5h1v1h-1zM1 6h1v1h-1zM4 6h1v1h-1zM5 7h1v1h-1zM11 8h1v1h-1zM11 11h1v1h-1z" fill-opacity="0.25"/><path d="M11 5h1v1h-1zM0 8h2v1h-2zM4 8h1v1h-1z" fill-opacity="0.5"/><path d="M3 3h1v1h-1zM6 3h1v1h-1zM3 4h1v1h-1zM6 4h1v1h-1zM2 5h1v1h-1zM5 5h1v1h-1zM5 6h1v1h-1zM7 6h1v1h-1zM7 7h1v1h-1zM8 8h3v1h-3zM7 9h1v1h-1zM7 10h1v1h-1zM7 12h1v1h-1zM7 13h1v1h-1zM2 14h1v1h-1zM7 14h1v1h-1z" fill-opacity="0.75"/><path d="M6 5h5v1h-5zM2 6h1v1h-1zM1 7h2v1h-2zM4 7h1v1h-1zM2 8h1v1h-1zM7 8h1v1h-1zM2 9h1v1h-1zM2 10h1v1h-1zM2 11h1v1h-1zM7 11h4v1h-4zM2 12h1v1h-1zM2 13h1v1h-1z"/></g><g id="g124"><path d="M2 13h1v1h-1zM1 14h1v1h-1zM3 14h1v1h-1z" fill-opacity="0.25"/><path d="M3 11h1v1h-1zM2 12h1v1h-1z" fill-opacity="0.5"/><path d="M2 11h1v1h-1zM3 13h1v1h-1zM2 14h1v1h-1z" fill-opacity="0.75"/><path d="M3 12h1v1h-1z"/></g><g id="g125"><path d="M3 3h1v1h-1zM9 4h1v1h-1zM3 5h1v1h-1zM5 5h1v1h-1zM4 6h1v1h-1zM9 6h1v1h-1zM5 8h1v1h-1zM7 8h1v1h-1zM3 9h1v1h-1zM7 9h1v1h-1zM9 9h1v1h-1zM0 10h1v1h-1zM1 11h1v1h-1zM2 12h1v1h-1zM4 12h1v1h-1zM7 12h1v1h-1zM0 13h1v1h-1zM3 13h2v1h-2zM7 13h1v1h-1zM6 14h1v1h-1zM8 14h1v1h-1z" fill-opacity="0.25"/><path d="M5 3h1v1h-1zM10 3h1v1h-1zM10 4h1v1h-1zM1 5h2v1h-2zM10 5h1v1h-1zM10 6h1v1h-1zM0 7h1v1h-1zM3 7h1v1h-1zM11 7h1v1h-1zM8 8h1v1h-1zM1 9h2v1h-2zM6 9h1v1h-1zM8 9h1v1h-1zM7 10h1v1h-1zM6 11h1v1h-1zM9 11h1v1h-1zM8 12h1v1h-1zM10 12h1v1h-1zM5 13h1v1h-1zM8 13h1v1h-1zM10 13h2v1h-2z" fill-opacity="0.5"/><path d="M2 3h1v1h-1zM6 3h4v1h-4zM6 5h4v1h-4zM1 6h1v1h-1zM3 6h1v1h-1zM5 7h4v1h-4zM2 8h1v1h-1zM5 9h1v1h-1zM10 9h1v1h-1zM3 10h1v1h-1zM6 10h1v1h-1zM9 10h1v1h-1zM3 12h1v1h-1zM5 12h2v1h-2zM9 12h1v1h-1zM2 13h1v1h-1zM7 14h1v1h-1z" fill-opacity="0.75"/><path d="M2 4h1v1h-1zM1 7h2v1h-2zM9 7h2v1h-2zM1 10h2v1h-2zM8 10h1v1h-1zM7 11h2v1h-2zM1 13h1v1h-1z"/></g><g id="g126"><path d="M1 3h1v1h-1zM6 3h3v1h-3zM9 4h2v1h-2zM10 7h1v1h-1zM5 9h1v1h-1zM9 10h1v1h-1zM3 11h1v1h-1zM4 12h1v1h-1zM9 12h1v1h-1zM4 13h1v1h-1zM10 13h1v1h-1zM0 14h1v1h-1zM3 14h1v1h-1zM11 14h1v1h-1z" fill-opacity="0.25"/><path d="M9 3h2v1h-2zM2 4h1v1h-1zM4 4h1v1h-1zM7 4h2v1h-2zM4 5h2v1h-2zM4 6h1v1h-1zM10 6h1v1h-1zM4 7h2v1h-2zM9 7h1v1h-1zM0 8h1v1h-1zM4 8h3v1h-3zM4 9h1v1h-1zM6 9h1v1h-1zM8 9h2v1h-2zM7 10h1v1h-1zM6 11h1v1h-1zM8 11h1v1h-1zM3 12h1v1h-1zM6 12h1v1h-1zM1 14h1v1h-1zM4 14h1v1h-1z" fill-opacity="0.5"/><path d="M1 4h1v1h-1zM6 4h1v1h-1zM2 5h1v1h-1zM6 6h4v1h-4zM7 9h1v1h-1zM4 11h1v1h-1zM7 11h1v1h-1zM5 12h1v1h-1zM10 12h1v1h-1zM1 13h3v1h-3zM5 14h6v1h-6z" fill-opacity="0.75"/><path d="M5 4h1v1h-1zM5 6h1v1h-1zM1 8h2v1h-2zM9 8h1v1h-1zM2 9h1v1h-1zM2 10h1v1h-1zM4 10h1v1h-1zM8 10h1v1h-1zM2 11h1v1h-1zM9 11h1v1h-1zM2 12h1v1h-1z"/></g><g id="g127"><path d="M3 6h1v1h-1zM8 6h1v1h-1zM3 7h1v1h-1zM8 7h1v1h-1zM3 8h1v1h-1zM8 8h1v1h-1zM3 9h1v1h-1zM8 9h1v1h-1zM3 10h1v1h-1zM8 10h1v1h-1z" fill-opacity="0.25"/><path d="M4 7h1v1h-1zM7 7h1v1h-1zM4 8h1v1h-1zM7 8h1v1h-1zM4 9h1v1h-1zM7 9h1v1h-1z" fill-opacity="0.5"/><path d="M4 6h4v1h-4zM5 10h2v1h-2zM1 14h1v1h-1zM10 14h1v1h-1z" fill-opacity="0.75"/><path d="M1 4h10v1h-10zM1 5h1v1h-1zM10 5h1v1h-1zM1 6h1v1h-1zM10 6h1v1h-1zM1 7h1v1h-1zM10 7h1v1h-1zM1 8h1v1h-1zM10 8h1v1h-1zM1 9h1v1h-1zM10 9h1v1h-1zM1 10h1v1h-1zM4 10h1v1h-1zM7 10h1v1h-1zM10 10h1v1h-1zM1 11h1v1h-1zM10 11h1v1h-1zM1 12h1v1h-1zM10 12h1v1h-1zM1 13h10v1h-10z"/></g></defs><use href="#g0" x="24" y="0" fill="#000"/><use href="#g1" x="36" y="0" fill="#000"/><use href="#g2" x="48" y="0" fill="#000"/><use href="#g3" x="60" y="0" fill="#000"/><use href="#g4" x="72" y="0" fill="#000"/><use href="#g5" x="84" y="0" fill="#000"/><use href="#g6" x="10" y="25" fill="#000"/><use href="#g7" x="22" y="25" fill="#000"/><use href="#g4" x="62" y="25" fill="#000"/><use href="#g5" x="74" y="25" fill="#000"/><use href="#g8" x="100" y="25" fill="#000"/><use href="#g9" x="112" y="25" fill="#000"/><use href="#a10" x="9" y="78" fill="#000"/><use href="#a11" x="15" y="78" fill="#000"/><use href="#g12" x="21" y="76" fill="#000"/><use href="#g13" x="33" y="76" fill="#000"/><use href="#g14" x="45" y="76" fill="#000"/><use href="#a15" x="68" y="78" fill="#ff0000"/><use href="#a11" x="74" y="78" fill="#ff0000"/><use href="#g16" x="80" y="76" fill="#ff0000"/><use href="#g17" x="92" y="76" fill="#ff0000"/><use href="#g18" x="104" y="76" fill="#ff0000"/><use href="#g19" x="116" y="76" fill="#ff0000"/><use href="#g20" x="128" y="76" fill="#ff0000"/><use href="#g21" x="140" y="76" fill="#ff0000"/><use href="#a22" x="165" y="78" fill="#000"/><use href="#a11" x="171" y="78" fill="#000"/><use href="#g23" x="177" y="76" fill="#000"/><use href="#g21" x="189" y="76" fill="#000"/><use href="#a24" x="213" y="78" fill="#000"/><use href="#a11" x="219" y="78" fill="#000"/><use href="#g23" x="225" y="76" fill="#000"/><use href="#g21" x="237" y="76" fill="#000"/><use href="#g25" x="249" y="76" fill="#000"/><use href="#g26" x="34" y="98" fill="#000"/><use href="#g27" x="46" y="98" fill="#000"/><use href="#g14" x="58" y="98" fill="#000"/><use href="#g28" x="70" y="98" fill="#000"/><use href="#g29" x="82" y="98" fill="#000"/><use href="#g27" x="272" y="97" fill="#000"/><use href="#g14" x="284" y="97" fill="#000"/><use href="#g30" x="296" y="97" fill="#000"/><use href="#g16" x="325" y="97" fill="#000"/><use href="#g17" x="337" y="97" fill="#000"/><use href="#g18" x="349" y="97" fill="#000"/><use href="#g19" x="361" y="97" fill="#000"/><use href="#g20" x="373" y="97" fill="#000"/><use href="#g21" x="385" y="97" fill="#000"/><use href="#g31" x="29" y="123" fill="#000"/><use href="#g32" x="41" y="123" fill="#000"/><use href="#g33" x="117" y="123" fill="#000"/><use href="#g34" x="129" y="123" fill="#000"/><use href="#g35" x="235" y="123" fill="#000"/><use href="#g36" x="247" y="123" fill="#000"/><use href="#g37" x="353" y="123" fill="#000"/><use href="#g38" x="365" y="123" fill="#000"/><use href="#a39" x="35" y="143" fill="#000"/><use href="#a40" x="41" y="143" fill="#000"/><use href="#a41" x="114" y="143" fill="#000"/><use href="#a42" x="120" y="143" fill="#000"/><use href="#a41" x="126" y="143" fill="#000"/><use href="#a41" x="132" y="143" fill="#000"/><use href="#a41" x="138" y="143" fill="#000"/><use href="#a41" x="235" y="143" fill="#000"/><use href="#a42" x="241" y="143" fill="#000"/><use href="#a41" x="247" y="143" fill="#000"/><use href="#a41" x="253" y="143" fill="#000"/><use href="#a43" x="347" y="143" fill="#000"/><use href="#a41" x="353" y="143" fill="#000"/><use href="#a42" x="359" y="143" fill="#000"/><use href="#a41" x="365" y="143" fill="#000"/><use href="#a41" x="371" y="143" fill="#000"/><use href="#a41" x="377" y="143" fill="#000"/><use href="#a39" x="35" y="160" fill="#000"/><use href="#a44" x="41" y="160" fill="#000"/><use href="#a41" x="114" y="160" fill="#000"/><use href="#a42" x="120" y="160" fill="#000"/><use href="#a41" x="126" y="160" fill="#000"/><use href="#a41" x="132" y="160" fill="#000"/><use href="#a41" x="138" y="160" fill="#000"/><use href="#a45" x="226" y="160" fill="#000"/><use href="#a10" x="232" y="160" fill="#000"/><use href="#a15" x="238" y="160" fill="#000"/><use href="#a41" x="244" y="160" fill="#000"/><use href="#a42" x="250" y="160" fill="#000"/><use href="#a41" x="256" y="160" fill="#000"/><use href="#a41" x="262" y="160" fill="#000"/><use href="#a43" x="347" y="160" fill="#000"/><use href="#a41" x="353" y="160" fill="#000"/><use href="#a42" x="359" y="160" fill="#000"/><use href="#a41" x="365" y="160" fill="#000"/><use href="#a41" x="371" y="160" fill="#000"/><use href="#a41" x="377" y="160" fill="#000"/><use href="#a39" x="35" y="177" fill="#000"/><use href="#a46" x="41" y="177" fill="#000"/><use href="#a41" x="114" y="177" fill="#000"/><use href="#a42" x="120" y="177" fill="#000"/><use href="#a41" x="126" y="177" fill="#000"/><use href="#a41" x="132" y="177" fill="#000"/><use href="#a41" x="138" y="177" fill="#000"/><use href="#a10" x="229" y="177" fill="#000"/><use href="#a15" x="235" y="177" fill="#000"/><use href="#a41" x="241" y="177" fill="#000"/><use href="#a42" x="247" y="177" fill="#000"/><use href="#a41" x="253" y="177" fill="#000"/><use href="#a41" x="259" y="177" fill="#000"/><use href="#a43" x="347" y="177" fill="#000"/><use href="#a41" x="353" y="177" fill="#000"/><use href="#a42" x="359" y="177" fill="#000"/><use href="#a41" x="365" y="177" fill="#000"/><use href="#a41" x="371" y="177" fill="#000"/><use href="#a41" x="377" y="177" fill="#000"/><use href="#a47" x="35" y="194" fill="#000"/><use href="#a40" x="41" y="194" fill="#000"/><use href="#a41" x="114" y="194" fill="#000"/><use href="#a42" x="120" y="194" fill="#000"/><use href="#a41" x="126" y="194" fill="#000"/><use href="#a41" x="132" y="194" fill="#000"/><use href="#a41" x="138" y="194" fill="#000"/><use href="#a41" x="235" y="194" fill="#000"/><use href="#a42" x="241" y="194" fill="#000"/><use href="#a41" x="247" y="194" fill="#000"/><use href="#a41" x="253" y="194" fill="#000"/><use href="#a43" x="347" y="194" fill="#000"/><use href="#a41" x="353" y="194" fill="#000"/><use href="#a42" x="359" y="194" fill="#000"/><use href="#a41" x="365" y="194" fill="#000"/><use href="#a41" x="371" y="194" fill="#000"/><use href="#a41" x="377" y="194" fill="#000"/><use href="#a47" x="35" y="211" fill="#000"/><use href="#a44" x="41" y="211" fill="#000"/><use href="#a41" x="114" y="211" fill="#000"/><use href="#a42" x="120" y="211" fill="#000"/><use href="#a41" x="126" y="211" fill="#000"/><use href="#a41" x="132" y="211" fill="#000"/><use href="#a41" x="138" y="211" fill="#000"/><use href="#a45" x="226" y="211" fill="#000"/><use href="#a10" x="232" y="211" fill="#000"/><use href="#a15" x="238" y="211" fill="#000"/><use href="#a41" x="244" y="211" fill="#000"/><use href="#a42" x="250" y="211" fill="#000"/><use href="#a41" x="256" y="211" fill="#000"/><use href="#a41" x="262" y="211" fill="#000"/><use href="#a43" x="347" y="211" fill="#000"/><use href="#a41" x="353" y="211" fill="#000"/><use href="#a42" x="359" y="211" fill="#000"/><use href="#a41" x="365" y="211" fill="#000"/><use href="#a41" x="371" y="211" fill="#000"/><use href="#a41" x="377" y="211" fill="#000"/><use href="#a47" x="35" y="228" fill="#000"/><use href="#a46" x="41" y="228" fill="#000"/><use href="#a41" x="114" y="228" fill="#000"/><use href="#a42" x="120" y="228" fill="#000"/><use href="#a41" x="126" y="228" fill="#000"/><use href="#a41" x="132" y="228" fill="#000"/><use href="#a41" x="138" y="228" fill="#000"/><use href="#a10" x="229" y="228" fill="#000"/><use href="#a15" x="235" y="228" fill="#000"/><use href="#a41" x="241" y="228" fill="#000"/><use href="#a42" x="247" y="228" fill="#000"/><use href="#a41" x="253" y="228" fill="#000"/><use href="#a41" x="259" y="228" fill="#000"/><use href="#a43" x="347" y="228" fill="#000"/><use href="#a41" x="353" y="228" fill="#000"/><use href="#a42" x="359" y="228" fill="#000"/><use href="#a41" x="365" y="228" fill="#000"/><use href="#a41" x="371" y="228" fill="#000"/><use href="#a41" x="377" y="228" fill="#000"/><use href="#a39" x="35" y="245" fill="#000"/><use href="#a48" x="41" y="245" fill="#000"/><use href="#a41" x="114" y="245" fill="#000"/><use href="#a42" x="120" y="245" fill="#000"/><use href="#a41" x="126" y="245" fill="#000"/><use href="#a41" x="132" y="245" fill="#000"/><use href="#a41" x="138" y="245" fill="#000"/><use href="#a41" x="235" y="245" fill="#000"/><use href="#a42" x="241" y="245" fill="#000"/><use href="#a41" x="247" y="245" fill="#000"/><use href="#a41" x="253" y="245" fill="#000"/><use href="#a43" x="347" y="245" fill="#000"/><use href="#a41" x="353" y="245" fill="#000"/><use href="#a42" x="359" y="245" fill="#000"/><use href="#a41" x="365" y="245" fill="#000"/><use href="#a41" x="371" y="245" fill="#000"/><use href="#a41" x="377" y="245" fill="#000"/><use href="#a39" x="35" y="262" fill="#000"/><use href="#a49" x="41" y="262" fill="#000"/><use href="#a41" x="114" y="262" fill="#000"/><use href="#a42" x="120" y="262" fill="#000"/><use href="#a41" x="126" y="262" fill="#000"/><use href="#a41" x="132" y="262" fill="#000"/><use href="#a41" x="138" y="262" fill="#000"/><use href="#a45" x="226" y="262" fill="#000"/><use href="#a10" x="232" y="262" fill="#000"/><use href="#a15" x="238" y="262" fill="#000"/><use href="#a41" x="244" y="262" fill="#000"/><use href="#a42" x="250" y="262" fill="#000"/><use href="#a41" x="256" y="262" fill="#000"/><use href="#a41" x="262" y="262" fill="#000"/><use href="#a43" x="347" y="262" fill="#000"/><use href="#a41" x="353" y="262" fill="#000"/><use href="#a42" x="359" y="262" fill="#000"/><use href="#a41" x="365" y="262" fill="#000"/><use href="#a41" x="371" y="262" fill="#000"/><use href="#a41" x="377" y="262" fill="#000"/><use href="#a39" x="35" y="279" fill="#000"/><use href="#a50" x="41" y="279" fill="#000"/><use href="#a10" x="108" y="279" fill="#000"/><use href="#a41" x="114" y="279" fill="#000"/><use href="#a41" x="120" y="279" fill="#000"/><use href="#a42" x="126" y="279" fill="#000"/><use href="#a41" x="132" y="279" fill="#000"/><use href="#a41" x="138" y="279" fill="#000"/><use href="#a41" x="144" y="279" fill="#000"/><use href="#a10" x="229" y="279" fill="#000"/><use href="#a15" x="235" y="279" fill="#000"/><use href="#a41" x="241" y="279" fill="#000"/><use href="#a42" x="247" y="279" fill="#000"/><use href="#a41" x="253" y="279" fill="#000"/><use href="#a41" x="259" y="279" fill="#000"/><use href="#a43" x="347" y="279" fill="#000"/><use href="#a41" x="353" y="279" fill="#000"/><use href="#a42" x="359" y="279" fill="#000"/><use href="#a41" x="365" y="279" fill="#000"/><use href="#a41" x="371" y="279" fill="#000"/><use href="#a41" x="377" y="279" fill="#000"/><use href="#a47" x="35" y="296" fill="#000"/><use href="#a48" x="41" y="296" fill="#000"/><use href="#a41" x="114" y="296" fill="#000"/><use href="#a42" x="120" y="296" fill="#000"/><use href="#a41" x="126" y="296" fill="#000"/><use href="#a41" x="132" y="296" fill="#000"/><use href="#a41" x="138" y="296" fill="#000"/><use href="#a41" x="235" y="296" fill="#000"/><use href="#a42" x="241" y="296" fill="#000"/><use href="#a41" x="247" y="296" fill="#000"/><use href="#a41" x="253" y="296" fill="#000"/><use href="#a43" x="347" y="296" fill="#000"/><use href="#a41" x="353" y="296" fill="#000"/><use href="#a42" x="359" y="296" fill="#000"/><use href="#a41" x="365" y="296" fill="#000"/><use href="#a41" x="371" y="296" fill="#000"/><use href="#a41" x="377" y="296" fill="#000"/><use href="#a47" x="35" y="313" fill="#000"/><use href="#a49" x="41" y="313" fill="#000"/><use href="#a41" x="114" y="313" fill="#000"/><use href="#a42" x="120" y="313" fill="#000"/><use href="#a41" x="126" y="313" fill="#000"/><use href="#a41" x="132" y="313" fill="#000"/><use href="#a41" x="138" y="313" fill="#000"/><use href="#a45" x="226" y="313" fill="#000"/><use href="#a10" x="232" y="313" fill="#000"/><use href="#a15" x="238" y="313" fill="#000"/><use href="#a41" x="244" y="313" fill="#000"/><use href="#a42" x="250" y="313" fill="#000"/><use href="#a41" x="256" y="313" fill="#000"/><use href="#a41" x="262" y="313" fill="#000"/><use href="#a43" x="347" y="313" fill="#000"/><use href="#a41" x="353" y="313" fill="#000"/><use href="#a42" x="359" y="313" fill="#000"/><use href="#a41" x="365" y="313" fill="#000"/><use href="#a41" x="371" y="313" fill="#000"/><use href="#a41" x="377" y="313" fill="#000"/><use href="#a47" x="35" y="330" fill="#000"/><use href="#a50" x="41" y="330" fill="#000"/><use href="#a41" x="114" y="330" fill="#000"/><use href="#a42" x="120" y="330" fill="#000"/><use href="#a41" x="126" y="330" fill="#000"/><use href="#a41" x="132" y="330" fill="#000"/><use href="#a41" x="138" y="330" fill="#000"/><use href="#a10" x="229" y="330" fill="#000"/><use href="#a15" x="235" y="330" fill="#000"/><use href="#a41" x="241" y="330" fill="#000"/><use href="#a42" x="247" y="330" fill="#000"/><use href="#a41" x="253" y="330" fill="#000"/><use href="#a41" x="259" y="330" fill="#000"/><use href="#a43" x="347" y="330" fill="#000"/><use href="#a41" x="353" y="330" fill="#000"/><use href="#a42" x="359" y="330" fill="#000"/><use href="#a41" x="365" y="330" fill="#000"/><use href="#a41" x="371" y="330" fill="#000"/><use href="#a41" x="377" y="330" fill="#000"/><use href="#g51" x="15" y="349" fill="#000"/><use href="#g52" x="27" y="349" fill="#000"/><use href="#g31" x="39" y="349" fill="#000"/><use href="#g32" x="51" y="349" fill="#000"/><use href="#g53" x="63" y="349" fill="#000"/><use href="#g54" x="75" y="349" fill="#000"/><use href="#g32" x="33" y="366" fill="#000"/><use href="#g55" x="45" y="366" fill="#000"/><use href="#g56" x="57" y="366" fill="#000"/><use href="#g34" x="129" y="366" fill="#000"/><use href="#g57" x="27" y="384" fill="#000"/><use href="#g58" x="39" y="384" fill="#000"/><use href="#g59" x="51" y="384" fill="#000"/><use href="#g60" x="63" y="384" fill="#000"/><use href="#g61" x="111" y="384" fill="#000"/><use href="#g62" x="123" y="384" fill="#000"/><use href="#g57" x="135" y="384" fill="#000"/><use href="#g58" x="147" y="384" fill="#000"/><use href="#g63" x="27" y="401" fill="#000"/><use href="#g64" x="39" y="401" fill="#000"/><use href="#g65" x="51" y="401" fill="#000"/><use href="#g66" x="63" y="401" fill="#000"/><use href="#g51" x="27" y="418" fill="#000"/><use href="#g52" x="39" y="418" fill="#000"/><use href="#g61" x="51" y="418" fill="#000"/><use href="#g62" x="63" y="418" fill="#000"/><use href="#a41" x="114" y="420" fill="#000"/><use href="#a42" x="120" y="420" fill="#000"/><use href="#a43" x="126" y="420" fill="#000"/><use href="#a41" x="132" y="420" fill="#000"/><use href="#a41" x="138" y="420" fill="#000"/><use href="#a67" x="150" y="420" fill="#000"/><use href="#g57" x="21" y="435" fill="#000"/><use href="#g58" x="33" y="435" fill="#000"/><use href="#g25" x="45" y="435" fill="#000"/><use href="#g68" x="57" y="435" fill="#000"/><use href="#g61" x="69" y="435" fill="#000"/><use href="#a41" x="114" y="437" fill="#000"/><use href="#a42" x="120" y="437" fill="#000"/><use href="#a41" x="126" y="437" fill="#000"/><use href="#a41" x="132" y="437" fill="#000"/><use href="#a41" x="138" y="437" fill="#000"/><use href="#a67" x="150" y="437" fill="#000"/><use href="#g63" x="16" y="457" fill="#000"/><use href="#g29" x="28" y="457" fill="#000"/><use href="#g69" x="40" y="457" fill="#000"/><use href="#g70" x="52" y="457" fill="#000"/><use href="#g71" x="64" y="457" fill="#000"/><use href="#g31" x="22" y="476" fill="#000"/><use href="#g69" x="34" y="476" fill="#000"/><use href="#g27" x="63" y="476" fill="#000"/><use href="#g14" x="75" y="476" fill="#000"/><use href="#g31" x="104" y="476" fill="#000"/><use href="#g69" x="116" y="476" fill="#000"/><use href="#g27" x="146" y="476" fill="#000"/><use href="#g14" x="158" y="476" fill="#000"/><use href="#g63" x="19" y="494" fill="#000"/><use href="#g29" x="31" y="494" fill="#000"/><use href="#a10" x="43" y="496" fill="#000"/><use href="#g72" x="69" y="494" fill="#000"/><use href="#g63" x="101" y="494" fill="#000"/><use href="#g29" x="113" y="494" fill="#000"/><use href="#a43" x="125" y="496" fill="#000"/><use href="#g72" x="152" y="494" fill="#000"/><use href="#g63" x="19" y="511" fill="#000"/><use href="#g29" x="31" y="511" fill="#000"/><use href="#a15" x="43" y="513" fill="#000"/><use href="#g23" x="69" y="511" fill="#000"/><use href="#g63" x="101" y="511" fill="#000"/><use href="#g29" x="113" y="511" fill="#000"/><use href="#a73" x="125" y="513" fill="#000"/><use href="#g72" x="152" y="511" fill="#000"/><use href="#g63" x="19" y="528" fill="#000"/><use href="#g29" x="31" y="528" fill="#000"/><use href="#a22" x="43" y="530" fill="#000"/><use href="#g72" x="69" y="528" fill="#000"/><use href="#g63" x="101" y="528" fill="#000"/><use href="#g29" x="113" y="528" fill="#000"/><use href="#a74" x="125" y="530" fill="#000"/><use href="#g72" x="152" y="528" fill="#000"/><use href="#g63" x="19" y="545" fill="#000"/><use href="#g29" x="31" y="545" fill="#000"/><use href="#a24" x="43" y="547" fill="#000"/><use href="#g72" x="69" y="545" fill="#000"/><use href="#g63" x="101" y="545" fill="#000"/><use href="#g29" x="113" y="545" fill="#000"/><use href="#a75" x="125" y="547" fill="#000"/><use href="#g72" x="152" y="545" fill="#000"/><use href="#g63" x="196" y="349" fill="#000"/><use href="#g64" x="208" y="349" fill="#000"/><use href="#g69" x="220" y="349" fill="#000"/><use href="#g70" x="232" y="349" fill="#000"/><use href="#g71" x="244" y="349" fill="#000"/><use href="#g63" x="221" y="368" fill="#000"/><use href="#g64" x="233" y="368" fill="#000"/><use href="#g69" x="245" y="368" fill="#000"/><use href="#g76" x="270" y="368" fill="#000"/><use href="#g77" x="282" y="368" fill="#000"/><use href="#g61" x="294" y="368" fill="#000"/><use href="#g62" x="306" y="368" fill="#000"/><use href="#a78" x="318" y="370" fill="#000"/><use href="#a79" x="324" y="370" fill="#000"/><use href="#a67" x="330" y="370" fill="#000"/><use href="#a80" x="336" y="370" fill="#000"/><use href="#g76" x="356" y="368" fill="#000"/><use href="#g77" x="368" y="368" fill="#000"/><use href="#g81" x="380" y="368" fill="#000"/><use href="#g82" x="392" y="368" fill="#000"/><use href="#a78" x="404" y="370" fill="#000"/><use href="#a79" x="410" y="370" fill="#000"/><use href="#a67" x="416" y="370" fill="#000"/><use href="#a80" x="422" y="370" fill="#000"/><use href="#g63" x="224" y="386" fill="#000"/><use href="#g64" x="236" y="386" fill="#000"/><use href="#a40" x="248" y="388" fill="#000"/><use href="#g63" x="224" y="403" fill="#000"/><use href="#g64" x="236" y="403" fill="#000"/><use href="#a44" x="248" y="405" fill="#000"/><use href="#g63" x="224" y="420" fill="#000"/><use href="#g64" x="236" y="420" fill="#000"/><use href="#a46" x="248" y="422" fill="#000"/><use href="#g63" x="224" y="437" fill="#000"/><use href="#g64" x="236" y="437" fill="#000"/><use href="#a83" x="248" y="439" fill="#000"/><use href="#g63" x="224" y="454" fill="#000"/><use href="#g64" x="236" y="454" fill="#000"/><use href="#a48" x="248" y="456" fill="#000"/><use href="#g63" x="224" y="471" fill="#000"/><use href="#g64" x="236" y="471" fill="#000"/><use href="#a49" x="248" y="473" fill="#000"/><use href="#g63" x="224" y="488" fill="#000"/><use href="#g64" x="236" y="488" fill="#000"/><use href="#a50" x="248" y="490" fill="#000"/><use href="#g63" x="224" y="505" fill="#000"/><use href="#g64" x="236" y="505" fill="#000"/><use href="#a84" x="248" y="507" fill="#000"/><use href="#g63" x="224" y="522" fill="#000"/><use href="#g64" x="236" y="522" fill="#000"/><use href="#a85" x="248" y="524" fill="#000"/><use href="#g63" x="224" y="539" fill="#000"/><use href="#g64" x="236" y="539" fill="#000"/><use href="#a86" x="248" y="541" fill="#000"/><use href="#g76" x="464" y="78" fill="#000"/><use href="#g77" x="476" y="78" fill="#000"/><use href="#g87" x="488" y="78" fill="#000"/><use href="#g88" x="500" y="78" fill="#000"/><use href="#g89" x="512" y="78" fill="#000"/><use href="#g81" x="524" y="78" fill="#000"/><use href="#g82" x="536" y="78" fill="#000"/><use href="#g90" x="548" y="78" fill="#000"/><use href="#g57" x="560" y="78" fill="#000"/><use href="#g58" x="572" y="78" fill="#000"/><use href="#g27" x="445" y="100" fill="#000"/><use href="#g14" x="457" y="100" fill="#000"/><use href="#g91" x="469" y="100" fill="#000"/><use href="#g92" x="481" y="100" fill="#000"/><use href="#g93" x="493" y="100" fill="#000"/><use href="#g32" x="505" y="100" fill="#000"/><use href="#a78" x="517" y="102" fill="#000"/><use href="#a41" x="523" y="102" fill="#000"/><use href="#a94" x="529" y="102" fill="#000"/><use href="#a10" x="535" y="102" fill="#000"/><use href="#a41" x="541" y="102" fill="#000"/><use href="#a41" x="547" y="102" fill="#000"/><use href="#a41" x="553" y="102" fill="#000"/><use href="#a80" x="559" y="102" fill="#000"/><use href="#a41" x="575" y="101" fill="#000"/><use href="#g95" x="641" y="101" fill="#000"/><use href="#g96" x="653" y="101" fill="#000"/><use href="#g61" x="665" y="101" fill="#000"/><use href="#g62" x="677" y="101" fill="#000"/><use href="#a11" x="689" y="103" fill="#000"/><use href="#a43" x="698" y="102" fill="#000"/><use href="#a79" x="766" y="100" fill="#000"/><use href="#a67" x="772" y="100" fill="#000"/><use href="#a39" x="490" y="125" fill="#e0a000"/><use href="#a48" x="496" y="125" fill="#e0a000"/><use href="#a39" x="490" y="135" fill="#00ffff"/><use href="#a49" x="496" y="135" fill="#00ffff"/><use href="#a39" x="490" y="145" fill="#ff00ff"/><use href="#a50" x="496" y="145" fill="#ff00ff"/><use href="#a47" x="727" y="125" fill="#e0a000"/><use href="#a48" x="733" y="125" fill="#e0a000"/><use href="#a47" x="727" y="135" fill="#00ffff"/><use href="#a49" x="733" y="135" fill="#00ffff"/><use href="#a47" x="727" y="145" fill="#ff00ff"/><use href="#a50" x="733" y="145" fill="#ff00ff"/><use href="#a39" x="490" y="368" fill="#ffff00"/><use href="#a40" x="496" y="368" fill="#ffff00"/><use href="#a39" x="490" y="378" fill="#00ff00"/><use href="#a44" x="496" y="378" fill="#00ff00"/><use href="#a39" x="490" y="388" fill="#ff0000"/><use href="#a46" x="496" y="388" fill="#ff0000"/><use href="#a47" x="727" y="368" fill="#ffff00"/><use href="#a40" x="733" y="368" fill="#ffff00"/><use href="#a47" x="727" y="378" fill="#00ff00"/><use href="#a44" x="733" y="378" fill="#00ff00"/><use href="#a47" x="727" y="388" fill="#ff0000"/><use href="#a46" x="733" y="388" fill="#ff0000"/><use href="#g97" x="453" y="413" fill="#000"/><use href="#g98" x="465" y="413" fill="#000"/><use href="#g72" x="477" y="413" fill="#000"/><use href="#g69" x="489" y="413" fill="#000"/><use href="#g53" x="501" y="413" fill="#000"/><use href="#g54" x="513" y="413" fill="#000"/><use href="#g99" x="467" y="437" fill="#000"/><use href="#g100" x="479" y="437" fill="#000"/><use href="#g97" x="491" y="437" fill="#000"/><use href="#g98" x="503" y="437" fill="#000"/><use href="#g72" x="515" y="437" fill="#000"/><use href="#g69" x="527" y="437" fill="#000"/><use href="#g61" x="544" y="437" fill="#000"/><use href="#g62" x="556" y="437" fill="#000"/><use href="#g13" x="568" y="437" fill="#000"/><use href="#g32" x="580" y="437" fill="#000"/><use href="#a11" x="592" y="439" fill="#000"/><use href="#a10" x="607" y="437" fill="#000"/><use href="#a79" x="619" y="437" fill="#000"/><use href="#a67" x="625" y="437" fill="#000"/><use href="#g99" x="672" y="435" fill="#000"/><use href="#g100" x="684" y="435" fill="#000"/><use href="#g35" x="696" y="435" fill="#000"/><use href="#a11" x="708" y="437" fill="#000"/><use href="#a47" x="724" y="436" fill="#000"/><use href="#a40" x="730" y="436" fill="#000"/><use href="#g101" x="452" y="472" fill="#000"/><use href="#g37" x="464" y="472" fill="#000"/><use href="#g101" x="476" y="472" fill="#000"/><use href="#g19" x="488" y="472" fill="#000"/><use href="#g31" x="500" y="472" fill="#000"/><use href="#g32" x="512" y="472" fill="#000"/><use href="#g53" x="524" y="472" fill="#000"/><use href="#g54" x="536" y="472" fill="#000"/><use href="#g37" x="465" y="494" fill="#000"/><use href="#g38" x="477" y="494" fill="#000"/><use href="#g101" x="489" y="494" fill="#000"/><use href="#a102" x="509" y="495" fill="#000"/><use href="#a103" x="515" y="495" fill="#000"/><use href="#a104" x="521" y="495" fill="#000"/><use href="#a102" x="527" y="495" fill="#000"/><use href="#a105" x="533" y="495" fill="#000"/><use href="#a11" x="539" y="495" fill="#000"/><use href="#a10" x="550" y="495" fill="#000"/><use href="#a42" x="556" y="495" fill="#000"/><use href="#a41" x="562" y="495" fill="#000"/><use href="#a106" x="574" y="495" fill="#000"/><use href="#a107" x="580" y="495" fill="#000"/><use href="#a104" x="586" y="495" fill="#000"/><use href="#a67" x="592" y="495" fill="#000"/><use href="#g108" x="613" y="494" fill="#000"/><use href="#g34" x="625" y="494" fill="#000"/><use href="#a11" x="637" y="496" fill="#000"/><use href="#a10" x="650" y="493" fill="#000"/><use href="#a41" x="656" y="493" fill="#000"/><use href="#a41" x="662" y="493" fill="#000"/><use href="#a42" x="668" y="493" fill="#000"/><use href="#a41" x="674" y="493" fill="#000"/><use href="#a41" x="680" y="493" fill="#000"/><use href="#a41" x="686" y="493" fill="#000"/><use href="#a106" x="698" y="493" fill="#000"/><use href="#a107" x="704" y="493" fill="#000"/><use href="#g101" x="728" y="494" fill="#000"/><use href="#g69" x="740" y="494" fill="#000"/><use href="#g70" x="752" y="494" fill="#000"/><use href="#g71" x="764" y="494" fill="#000"/><use href="#a11" x="776" y="496" fill="#000"/><use href="#g109" x="465" y="528" fill="#000"/><use href="#g19" x="477" y="528" fill="#000"/><use href="#g101" x="489" y="528" fill="#000"/><use href="#a102" x="509" y="529" fill="#000"/><use href="#a110" x="515" y="529" fill="#000"/><use href="#a104" x="521" y="529" fill="#000"/><use href="#a102" x="527" y="529" fill="#000"/><use href="#a105" x="533" y="529" fill="#000"/><use href="#a11" x="539" y="529" fill="#000"/><use href="#a10" x="550" y="528" fill="#000"/><use href="#a42" x="556" y="528" fill="#000"/><use href="#a41" x="562" y="528" fill="#000"/><use href="#a110" x="574" y="528" fill="#000"/><use href="#a104" x="580" y="528" fill="#000"/><use href="#a67" x="586" y="528" fill="#000"/><use href="#g108" x="613" y="527" fill="#000"/><use href="#g34" x="625" y="527" fill="#000"/><use href="#a11" x="637" y="529" fill="#000"/><use href="#a10" x="650" y="526" fill="#000"/><use href="#a41" x="656" y="526" fill="#000"/><use href="#a41" x="662" y="526" fill="#000"/><use href="#a42" x="668" y="526" fill="#000"/><use href="#a41" x="674" y="526" fill="#000"/><use href="#a41" x="680" y="526" fill="#000"/><use href="#a41" x="686" y="526" fill="#000"/><use href="#a111" x="698" y="526" fill="#000"/><use href="#a39" x="730" y="521" fill="#000"/><use href="#a40" x="736" y="521" fill="#000"/><use href="#g112" x="5" y="579" fill="#000"/><use href="#g113" x="17" y="579" fill="#000"/><use href="#g114" x="294" y="579" fill="#000"/><use href="#g115" x="306" y="579" fill="#000"/><use href="#g116" x="318" y="579" fill="#000"/><use href="#g117" x="330" y="579" fill="#000"/><use href="#g118" x="415" y="579" fill="#000"/><use href="#g119" x="427" y="579" fill="#000"/><use href="#g120" x="439" y="579" fill="#000"/><use href="#g121" x="458.328" y="579" fill="#000"/><use href="#g122" x="474.328" y="579" fill="#000"/><use href="#g123" x="486.328" y="579" fill="#000"/><use href="#g124" x="498.328" y="579" fill="#000"/><use href="#g125" x="510.328" y="579" fill="#000"/><use href="#g126" x="526.328" y="579" fill="#000"/><use href="#g127" x="538.328" y="579" fill="#000"/></svg>
</body></html>
